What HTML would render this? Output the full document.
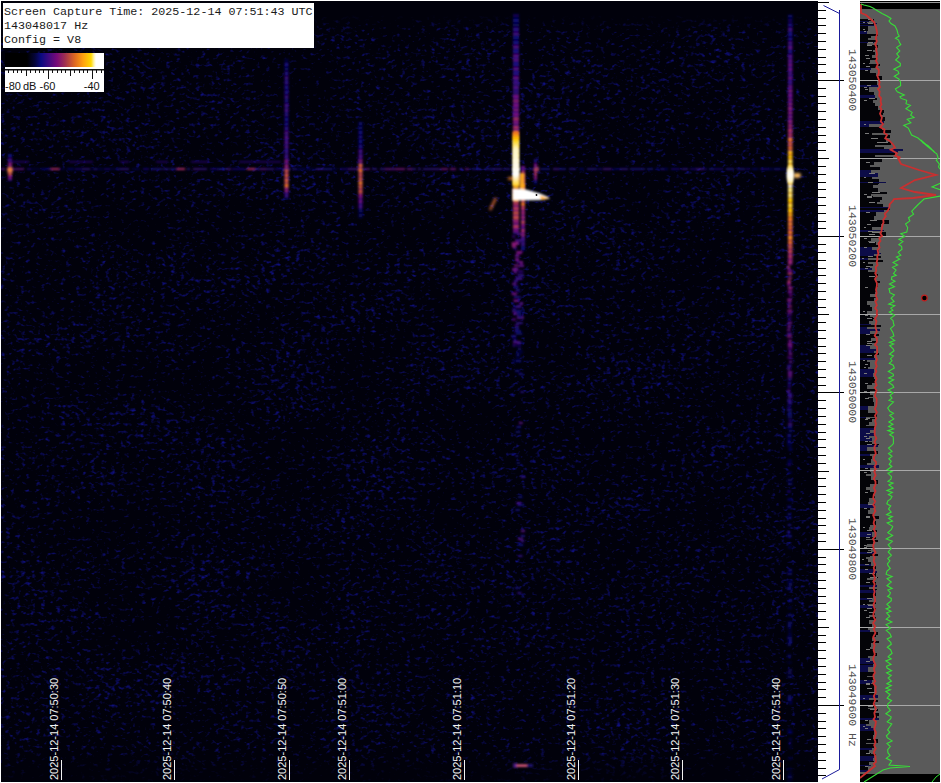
<!DOCTYPE html><html><head><meta charset="utf-8"><style>
html,body{margin:0;padding:0;background:#fff;width:941px;height:783px;overflow:hidden;position:relative}
.abs{position:absolute}
#spec{left:1px;top:1px;width:817px;height:781px;background:#01010b;overflow:hidden}
#tbox{left:3px;top:3px;width:311px;height:45px;background:#fff;font-family:"Liberation Mono",monospace;font-size:11.7px;color:#1a1a1a;white-space:pre}
#tbox div{position:absolute;left:1px;line-height:14px;margin-top:2px}
.tl{position:absolute;font-family:"Liberation Sans",sans-serif;font-size:11px;line-height:12px;color:#f2f2f2;white-space:pre;transform-origin:0 0;transform:rotate(-90deg)}
.tk{position:absolute;width:1px;height:20px;top:760px;background:#f2f2f2}
.fl{position:absolute;font-family:"Liberation Mono",monospace;font-size:11.5px;line-height:12px;color:#505050;white-space:pre;transform-origin:0 0;transform:rotate(90deg)}
#cb{left:5px;top:53px;width:99px;height:39px;background:#fff}
#grad{left:0;top:0;width:99px;height:14px;background:linear-gradient(90deg,#000 0px,#000 22px,#05053a 30px,#0a0a80 36px,#400a80 44px,#780a78 52px,#a03050 60px,#e06a20 70px,#ffa010 78px,#ffd800 86px,#fff4b0 89px,#fff 91px,#fff 99px)}
.cbt{position:absolute;top:27px;font-family:"Liberation Sans",sans-serif;font-size:11px;line-height:12px;color:#111;white-space:pre}
</style></head><body>
<div id="spec" class="abs"><svg width="817" height="781" style="position:absolute;left:0;top:0">
<defs>
<filter id="nz" x="0" y="0" width="100%" height="100%" color-interpolation-filters="sRGB">
<feTurbulence type="fractalNoise" baseFrequency="0.2 0.27" numOctaves="2" seed="5" result="t"/>
<feTurbulence type="fractalNoise" baseFrequency="0.012 0.02" numOctaves="2" seed="9" result="t2"/>
<feColorMatrix in="t" type="matrix" values="1 0 0 0 0  0 1 0 0 0  0 0 1 0 0  0 0 0 0 1" result="ta"/>
<feColorMatrix in="t2" type="matrix" values="1 0 0 0 0  0 1 0 0 0  0 0 1 0 0  0 0 0 0 1" result="t2a"/>
<feComposite in="ta" in2="t2a" operator="arithmetic" k1="0" k2="1" k3="0.22" k4="-0.11" result="t3"/>
<feColorMatrix in="t3" type="matrix" values="0 0 0 0 0.06  0 0 0 0 0.06  0 0 0 0 0.5  3 0 0 0 -1.74"/>
</filter>
<filter id="b05" x="-50%" y="-5%" width="200%" height="110%"><feGaussianBlur stdDeviation="1.1 1"/></filter>
<filter id="b1" x="-50%" y="-50%" width="200%" height="200%"><feGaussianBlur stdDeviation="1.4"/></filter>
<filter id="b2" x="-50%" y="-20%" width="200%" height="140%"><feGaussianBlur stdDeviation="2"/></filter>
<linearGradient id="s516" x1="0" y1="0" x2="0" y2="1">
<stop offset="0" stop-color="#3020a0" stop-opacity="0.7"/>
<stop offset="0.12" stop-color="#6a20a8"/>
<stop offset="0.25" stop-color="#7a2090"/>
<stop offset="0.34" stop-color="#e07030"/>
<stop offset="0.4" stop-color="#ffd000"/>
<stop offset="0.5" stop-color="#fffbe0"/>
<stop offset="0.53" stop-color="#ffe060"/>
<stop offset="0.58" stop-color="#e08030"/>
<stop offset="0.66" stop-color="#8030a0"/>
<stop offset="0.8" stop-color="#4020b0"/>
<stop offset="1" stop-color="#2020a0" stop-opacity="0"/>
</linearGradient>
<linearGradient id="s791" x1="0" y1="0" x2="0" y2="1">
<stop offset="0" stop-color="#3020a0" stop-opacity="0.6"/>
<stop offset="0.1" stop-color="#5a20b0"/>
<stop offset="0.22" stop-color="#a03080"/>
<stop offset="0.3" stop-color="#ff9020"/>
<stop offset="0.36" stop-color="#ffe070"/>
<stop offset="0.4" stop-color="#ffffff"/>
<stop offset="0.44" stop-color="#ffd840"/>
<stop offset="0.5" stop-color="#ff9a20"/>
<stop offset="0.6" stop-color="#a03090"/>
<stop offset="0.85" stop-color="#5020a0"/>
<stop offset="1" stop-color="#2020a0" stop-opacity="0"/>
</linearGradient>
<linearGradient id="s286" x1="0" y1="0" x2="0" y2="1">
<stop offset="0" stop-color="#3020a0" stop-opacity="0.5"/>
<stop offset="0.3" stop-color="#5020a8"/>
<stop offset="0.7" stop-color="#8a3070"/>
<stop offset="0.8" stop-color="#e08040"/>
<stop offset="0.87" stop-color="#c04a60"/>
<stop offset="1" stop-color="#3020a0" stop-opacity="0.3"/>
</linearGradient>
<linearGradient id="s360" x1="0" y1="0" x2="0" y2="1">
<stop offset="0" stop-color="#3020a0" stop-opacity="0.3"/>
<stop offset="0.35" stop-color="#6a20a0"/>
<stop offset="0.5" stop-color="#d07040"/>
<stop offset="0.6" stop-color="#a04070"/>
<stop offset="1" stop-color="#3020a0" stop-opacity="0.3"/>
</linearGradient>
</defs>
<rect x="0" y="0" width="817" height="781" filter="url(#nz)"/>
<linearGradient id="ft" x1="0" y1="0" x2="0" y2="1"><stop offset="0" stop-color="#01010b"/><stop offset="0.45" stop-color="#01010b"/><stop offset="1" stop-color="#01010b" stop-opacity="0"/></linearGradient>
<linearGradient id="fb" x1="0" y1="0" x2="0" y2="1"><stop offset="0" stop-color="#01010b" stop-opacity="0"/><stop offset="1" stop-color="#01010b" stop-opacity="0.85"/></linearGradient>
<rect x="0" y="0" width="817" height="30" fill="url(#ft)"/>
<rect x="0" y="745" width="817" height="36" fill="url(#fb)"/>
<g filter="url(#b05)"><rect x="0" y="167.3" width="4" height="1.6" fill="#580b81"/><rect x="6" y="167.3" width="8" height="1.6" fill="#4a0b81"/><rect x="14" y="167.3" width="9" height="1.6" fill="#5e0b81"/><rect x="26" y="167.3" width="4" height="1.6" fill="#0a0972"/><rect x="30" y="167.3" width="9" height="1.6" fill="#05053c"/><rect x="40" y="167.3" width="7" height="1.6" fill="#09086a"/><rect x="47" y="167.3" width="9" height="1.6" fill="#190a80"/><rect x="56" y="167.3" width="8" height="1.6" fill="#050540"/><rect x="66" y="167.3" width="7" height="1.6" fill="#09086c"/><rect x="74" y="167.3" width="7" height="1.6" fill="#0a0872"/><rect x="81" y="167.3" width="8" height="1.6" fill="#2e0a80"/><rect x="90" y="167.3" width="3" height="1.6" fill="#06064c"/><rect x="93" y="167.3" width="3" height="1.6" fill="#1f0a80"/><rect x="96" y="167.3" width="6" height="1.6" fill="#06064d"/><rect x="103" y="167.3" width="6" height="1.6" fill="#0a0870"/><rect x="109" y="167.3" width="8" height="1.6" fill="#050540"/><rect x="117" y="167.3" width="3" height="1.6" fill="#1c0a80"/><rect x="120" y="167.3" width="8" height="1.6" fill="#2f0a80"/><rect x="131" y="167.3" width="8" height="1.6" fill="#050543"/><rect x="142" y="167.3" width="6" height="1.6" fill="#0b0978"/><rect x="150" y="167.3" width="4" height="1.6" fill="#150a80"/><rect x="154" y="167.3" width="7" height="1.6" fill="#1c0a80"/><rect x="162" y="167.3" width="6" height="1.6" fill="#260a80"/><rect x="169" y="167.3" width="6" height="1.6" fill="#1a0a80"/><rect x="175" y="167.3" width="9" height="1.6" fill="#0a086e"/><rect x="186" y="167.3" width="3" height="1.6" fill="#250a80"/><rect x="192" y="167.3" width="7" height="1.6" fill="#400b81"/><rect x="199" y="167.3" width="7" height="1.6" fill="#310a80"/><rect x="209" y="167.3" width="7" height="1.6" fill="#0a0871"/><rect x="216" y="167.3" width="8" height="1.6" fill="#160a80"/><rect x="225" y="167.3" width="5" height="1.6" fill="#410b81"/><rect x="231" y="167.3" width="4" height="1.6" fill="#0a0870"/><rect x="235" y="167.3" width="9" height="1.6" fill="#0b0977"/><rect x="246" y="167.3" width="5" height="1.6" fill="#0a0976"/><rect x="251" y="167.3" width="8" height="1.6" fill="#280a80"/><rect x="259" y="167.3" width="6" height="1.6" fill="#510b81"/><rect x="265" y="167.3" width="8" height="1.6" fill="#2f0a80"/><rect x="274" y="167.3" width="6" height="1.6" fill="#0a0973"/><rect x="280" y="167.3" width="4" height="1.6" fill="#06064d"/><rect x="284" y="167.3" width="6" height="1.6" fill="#1e0a80"/><rect x="292" y="167.3" width="3" height="1.6" fill="#220a80"/><rect x="295" y="167.3" width="9" height="1.6" fill="#070758"/><rect x="305" y="167.3" width="3" height="1.6" fill="#090869"/><rect x="308" y="167.3" width="6" height="1.6" fill="#050543"/><rect x="315" y="167.3" width="8" height="1.6" fill="#280a80"/><rect x="323" y="167.3" width="8" height="1.6" fill="#160a80"/><rect x="331" y="167.3" width="5" height="1.6" fill="#06064b"/><rect x="339" y="167.3" width="8" height="1.6" fill="#0a0870"/><rect x="347" y="167.3" width="9" height="1.6" fill="#3f0b81"/><rect x="356" y="167.3" width="5" height="1.6" fill="#570b81"/><rect x="363" y="167.3" width="6" height="1.6" fill="#550b81"/><rect x="371" y="167.3" width="5" height="1.6" fill="#270a80"/><rect x="379" y="167.3" width="5" height="1.6" fill="#270a80"/><rect x="384" y="167.3" width="6" height="1.6" fill="#600b81"/><rect x="390" y="167.3" width="5" height="1.6" fill="#570b81"/><rect x="395" y="167.3" width="9" height="1.6" fill="#78127a"/><rect x="406" y="167.3" width="5" height="1.6" fill="#600b81"/><rect x="411" y="167.3" width="4" height="1.6" fill="#270a80"/><rect x="417" y="167.3" width="3" height="1.6" fill="#2c0a80"/><rect x="422" y="167.3" width="9" height="1.6" fill="#270a80"/><rect x="431" y="167.3" width="8" height="1.6" fill="#360a80"/><rect x="440" y="167.3" width="7" height="1.6" fill="#77127b"/><rect x="449" y="167.3" width="6" height="1.6" fill="#730f7e"/><rect x="458" y="167.3" width="4" height="1.6" fill="#2c0a80"/><rect x="464" y="167.3" width="4" height="1.6" fill="#630b81"/><rect x="471" y="167.3" width="9" height="1.6" fill="#1d0a80"/><rect x="483" y="167.3" width="9" height="1.6" fill="#180a80"/><rect x="492" y="167.3" width="9" height="1.6" fill="#2b0a80"/><rect x="503" y="167.3" width="6" height="1.6" fill="#250a80"/><rect x="511" y="167.3" width="9" height="1.6" fill="#120a80"/><rect x="520" y="167.3" width="5" height="1.6" fill="#3c0a80"/><rect x="528" y="167.3" width="5" height="1.6" fill="#250a80"/><rect x="533" y="167.3" width="6" height="1.6" fill="#08075a"/><rect x="540" y="167.3" width="9" height="1.6" fill="#0c0a80"/><rect x="552" y="167.3" width="6" height="1.6" fill="#3a0a80"/><rect x="558" y="167.3" width="7" height="1.6" fill="#160a80"/><rect x="568" y="167.3" width="7" height="1.6" fill="#240a80"/><rect x="578" y="167.3" width="5" height="1.6" fill="#090869"/><rect x="586" y="167.3" width="7" height="1.6" fill="#260a80"/><rect x="593" y="167.3" width="3" height="1.6" fill="#180a80"/><rect x="597" y="167.3" width="4" height="1.6" fill="#0a0870"/><rect x="602" y="167.3" width="8" height="1.6" fill="#3f0b81"/><rect x="610" y="167.3" width="9" height="1.6" fill="#070651"/><rect x="619" y="167.3" width="8" height="1.6" fill="#2c0a80"/><rect x="629" y="167.3" width="7" height="1.6" fill="#180a80"/><rect x="636" y="167.3" width="8" height="1.6" fill="#1b0a80"/><rect x="646" y="167.3" width="6" height="1.6" fill="#0d0a80"/><rect x="654" y="167.3" width="6" height="1.6" fill="#070651"/><rect x="660" y="167.3" width="3" height="1.6" fill="#1c0a80"/><rect x="663" y="167.3" width="4" height="1.6" fill="#090867"/><rect x="670" y="167.3" width="9" height="1.6" fill="#0a0975"/><rect x="681" y="167.3" width="6" height="1.6" fill="#2b0a80"/><rect x="689" y="167.3" width="6" height="1.6" fill="#0a086d"/><rect x="695" y="167.3" width="8" height="1.6" fill="#370a80"/><rect x="703" y="167.3" width="3" height="1.6" fill="#0a0870"/><rect x="708" y="167.3" width="5" height="1.6" fill="#150a80"/><rect x="713" y="167.3" width="9" height="1.6" fill="#0a086c"/><rect x="725" y="167.3" width="8" height="1.6" fill="#170a80"/><rect x="736" y="167.3" width="8" height="1.6" fill="#200a80"/><rect x="745" y="167.3" width="4" height="1.6" fill="#0a0870"/><rect x="751" y="167.3" width="6" height="1.6" fill="#08075d"/><rect x="759" y="167.3" width="9" height="1.6" fill="#0a0975"/><rect x="768" y="167.3" width="4" height="1.6" fill="#08075e"/><rect x="773" y="167.3" width="6" height="1.6" fill="#150a80"/><rect x="779" y="167.3" width="7" height="1.6" fill="#06064f"/><rect x="10" y="160" width="18" height="1.5" fill="#260a80" opacity="0.8"/><rect x="68" y="160" width="24" height="1.5" fill="#260a80" opacity="0.8"/><rect x="119" y="160" width="9" height="1.5" fill="#260a80" opacity="0.8"/><rect x="155" y="160" width="12" height="1.5" fill="#260a80" opacity="0.8"/><rect x="190" y="160" width="18" height="1.5" fill="#260a80" opacity="0.8"/><rect x="238" y="160" width="42" height="1.5" fill="#260a80" opacity="0.8"/><rect x="50" y="167" width="8" height="2" fill="#a02c60"/><rect x="176" y="167" width="8" height="2" fill="#a02c60"/><rect x="246" y="167" width="8" height="2" fill="#a02c60"/><rect x="7" y="153.0" width="4" height="3.0" fill="#0e0a80"/><rect x="7" y="156.0" width="4" height="1.5" fill="#040437"/><rect x="7" y="157.5" width="4" height="2.5" fill="#410b81"/><rect x="7" y="160.0" width="4" height="1.5" fill="#090865"/><rect x="7" y="161.5" width="4" height="3.5" fill="#801775"/><rect x="7" y="165.0" width="4" height="1.5" fill="#3a0a80"/><rect x="7" y="166.5" width="4" height="3.5" fill="#aa3259"/><rect x="7" y="170.0" width="4" height="1.5" fill="#720f7e"/><rect x="7" y="171.5" width="4" height="3.0" fill="#bd4548"/><rect x="7" y="174.5" width="4" height="1.5" fill="#811874"/><rect x="7" y="176.0" width="4" height="2.5" fill="#710e7f"/><rect x="7" y="178.5" width="4" height="1.5" fill="#240a80"/><rect x="283.5" y="58.0" width="4" height="2.5" fill="#060549"/><rect x="283.5" y="60.5" width="4" height="1.5" fill="#02021d"/><rect x="283.5" y="62.0" width="4" height="3.0" fill="#140a80"/><rect x="283.5" y="65.0" width="4" height="1.5" fill="#04043a"/><rect x="283.5" y="66.5" width="4" height="3.0" fill="#0a0870"/><rect x="283.5" y="69.5" width="4" height="1.5" fill="#03032f"/><rect x="283.5" y="71.0" width="4" height="3.0" fill="#200a80"/><rect x="283.5" y="74.0" width="4" height="1.5" fill="#050543"/><rect x="283.5" y="75.5" width="4" height="3.0" fill="#3b0a80"/><rect x="283.5" y="78.5" width="4" height="1.5" fill="#08075f"/><rect x="283.5" y="80.0" width="4" height="3.5" fill="#2f0a80"/><rect x="283.5" y="83.5" width="4" height="1.5" fill="#070653"/><rect x="283.5" y="85.0" width="4" height="3.0" fill="#1f0a80"/><rect x="283.5" y="88.0" width="4" height="1.5" fill="#050543"/><rect x="283.5" y="89.5" width="4" height="3.5" fill="#1e0a80"/><rect x="283.5" y="93.0" width="4" height="1.5" fill="#050541"/><rect x="283.5" y="94.5" width="4" height="2.5" fill="#370a80"/><rect x="283.5" y="97.0" width="4" height="1.5" fill="#08075b"/><rect x="283.5" y="98.5" width="4" height="3.0" fill="#1e0a80"/><rect x="283.5" y="101.5" width="4" height="1.5" fill="#050541"/><rect x="283.5" y="103.0" width="4" height="3.0" fill="#3c0a80"/><rect x="283.5" y="106.0" width="4" height="1.5" fill="#080760"/><rect x="283.5" y="107.5" width="4" height="3.5" fill="#3c0a80"/><rect x="283.5" y="111.0" width="4" height="1.5" fill="#080760"/><rect x="283.5" y="112.5" width="4" height="3.0" fill="#280a80"/><rect x="283.5" y="115.5" width="4" height="1.5" fill="#06064b"/><rect x="283.5" y="117.0" width="4" height="3.0" fill="#130a80"/><rect x="283.5" y="120.0" width="4" height="1.5" fill="#040439"/><rect x="283.5" y="121.5" width="4" height="3.0" fill="#1c0a80"/><rect x="283.5" y="124.5" width="4" height="1.5" fill="#05053f"/><rect x="283.5" y="126.0" width="4" height="3.0" fill="#2c0a80"/><rect x="283.5" y="129.0" width="4" height="1.5" fill="#07064f"/><rect x="283.5" y="130.5" width="4" height="3.0" fill="#4f0b81"/><rect x="283.5" y="133.5" width="4" height="1.5" fill="#0a0975"/><rect x="283.5" y="135.0" width="4" height="3.0" fill="#530b81"/><rect x="283.5" y="138.0" width="4" height="1.5" fill="#0b0978"/><rect x="283.5" y="139.5" width="4" height="3.5" fill="#4a0b81"/><rect x="283.5" y="143.0" width="4" height="1.5" fill="#0a086f"/><rect x="283.5" y="144.5" width="4" height="3.0" fill="#4e0b81"/><rect x="283.5" y="147.5" width="4" height="1.5" fill="#0a0973"/><rect x="283.5" y="149.0" width="4" height="3.0" fill="#360a80"/><rect x="283.5" y="152.0" width="4" height="1.5" fill="#08075a"/><rect x="283.5" y="153.5" width="4" height="3.5" fill="#3b0a80"/><rect x="283.5" y="157.0" width="4" height="1.5" fill="#080760"/><rect x="283.5" y="158.5" width="4" height="3.5" fill="#75107c"/><rect x="283.5" y="162.0" width="4" height="1.5" fill="#2a0a80"/><rect x="283.5" y="163.5" width="4" height="3.5" fill="#8a1d6f"/><rect x="283.5" y="167.0" width="4" height="1.5" fill="#470b81"/><rect x="283.5" y="168.5" width="4" height="3.0" fill="#cc543a"/><rect x="283.5" y="171.5" width="4" height="1.5" fill="#8d206c"/><rect x="283.5" y="173.0" width="4" height="3.5" fill="#cd5539"/><rect x="283.5" y="176.5" width="4" height="1.5" fill="#8e206c"/><rect x="283.5" y="178.0" width="4" height="3.0" fill="#d65e30"/><rect x="283.5" y="181.0" width="4" height="1.5" fill="#952567"/><rect x="283.5" y="182.5" width="4" height="3.5" fill="#e46c23"/><rect x="283.5" y="186.0" width="4" height="1.5" fill="#a02c60"/><rect x="283.5" y="187.5" width="4" height="3.5" fill="#7d1577"/><rect x="283.5" y="191.0" width="4" height="1.5" fill="#350a80"/><rect x="283.5" y="192.5" width="4" height="3.5" fill="#380a80"/><rect x="283.5" y="196.0" width="4" height="1.5" fill="#08075d"/><rect x="357.5" y="121.0" width="4" height="3.0" fill="#09086b"/><rect x="357.5" y="124.0" width="4" height="1.5" fill="#03032c"/><rect x="357.5" y="125.5" width="4" height="3.0" fill="#090867"/><rect x="357.5" y="128.5" width="4" height="1.5" fill="#03032b"/><rect x="357.5" y="130.0" width="4" height="3.5" fill="#0f0a80"/><rect x="357.5" y="133.5" width="4" height="1.5" fill="#040437"/><rect x="357.5" y="135.0" width="4" height="2.5" fill="#1a0a80"/><rect x="357.5" y="137.5" width="4" height="1.5" fill="#05053d"/><rect x="357.5" y="139.0" width="4" height="3.5" fill="#0d0a80"/><rect x="357.5" y="142.5" width="4" height="1.5" fill="#040436"/><rect x="357.5" y="144.0" width="4" height="3.0" fill="#1a0a80"/><rect x="357.5" y="147.0" width="4" height="1.5" fill="#05053d"/><rect x="357.5" y="148.5" width="4" height="3.5" fill="#410b81"/><rect x="357.5" y="152.0" width="4" height="1.5" fill="#090866"/><rect x="357.5" y="153.5" width="4" height="3.5" fill="#4a0b81"/><rect x="357.5" y="157.0" width="4" height="1.5" fill="#0a086f"/><rect x="357.5" y="158.5" width="4" height="3.0" fill="#811874"/><rect x="357.5" y="161.5" width="4" height="1.5" fill="#3b0a80"/><rect x="357.5" y="163.0" width="4" height="3.0" fill="#d65e30"/><rect x="357.5" y="166.0" width="4" height="1.5" fill="#962567"/><rect x="357.5" y="167.5" width="4" height="3.5" fill="#e76f20"/><rect x="357.5" y="171.0" width="4" height="1.5" fill="#a32d5e"/><rect x="357.5" y="172.5" width="4" height="2.5" fill="#c9513c"/><rect x="357.5" y="175.0" width="4" height="1.5" fill="#8b1e6e"/><rect x="357.5" y="176.5" width="4" height="2.5" fill="#d45c32"/><rect x="357.5" y="179.0" width="4" height="1.5" fill="#942468"/><rect x="357.5" y="180.5" width="4" height="2.5" fill="#f17e17"/><rect x="357.5" y="183.0" width="4" height="1.5" fill="#b03854"/><rect x="357.5" y="184.5" width="4" height="3.0" fill="#d45c32"/><rect x="357.5" y="187.5" width="4" height="1.5" fill="#932468"/><rect x="357.5" y="189.0" width="4" height="3.5" fill="#c74f3e"/><rect x="357.5" y="192.5" width="4" height="1.5" fill="#8a1d6f"/><rect x="357.5" y="194.0" width="4" height="3.5" fill="#76117c"/><rect x="357.5" y="197.5" width="4" height="1.5" fill="#2c0a80"/><rect x="357.5" y="199.0" width="4" height="3.5" fill="#670b81"/><rect x="357.5" y="202.5" width="4" height="1.5" fill="#180a80"/><rect x="357.5" y="204.0" width="4" height="3.0" fill="#440b81"/><rect x="357.5" y="207.0" width="4" height="1.5" fill="#090868"/><rect x="357.5" y="208.5" width="4" height="2.5" fill="#090865"/><rect x="357.5" y="211.0" width="4" height="1.5" fill="#03032a"/><rect x="357.5" y="212.5" width="4" height="3.5" fill="#080759"/><rect x="357.5" y="216.0" width="4" height="1.5" fill="#030324"/><rect x="512" y="13.0" width="6" height="3.0" fill="#070652"/><rect x="512" y="16.0" width="6" height="1.5" fill="#020221"/><rect x="512" y="17.5" width="6" height="3.5" fill="#0a0974"/><rect x="512" y="21.0" width="6" height="1.5" fill="#040430"/><rect x="512" y="22.5" width="6" height="2.5" fill="#080761"/><rect x="512" y="25.0" width="6" height="1.5" fill="#030328"/><rect x="512" y="26.5" width="6" height="3.5" fill="#250a80"/><rect x="512" y="30.0" width="6" height="1.5" fill="#060548"/><rect x="512" y="31.5" width="6" height="3.0" fill="#410b81"/><rect x="512" y="34.5" width="6" height="1.5" fill="#090865"/><rect x="512" y="36.0" width="6" height="2.5" fill="#100a80"/><rect x="512" y="38.5" width="6" height="1.5" fill="#040438"/><rect x="512" y="40.0" width="6" height="3.0" fill="#190a80"/><rect x="512" y="43.0" width="6" height="1.5" fill="#05053c"/><rect x="512" y="44.5" width="6" height="3.0" fill="#4f0b81"/><rect x="512" y="47.5" width="6" height="1.5" fill="#0a0974"/><rect x="512" y="49.0" width="6" height="3.0" fill="#1b0a80"/><rect x="512" y="52.0" width="6" height="1.5" fill="#05053e"/><rect x="512" y="53.5" width="6" height="2.5" fill="#580b81"/><rect x="512" y="56.0" width="6" height="1.5" fill="#0b097d"/><rect x="512" y="57.5" width="6" height="3.0" fill="#590b81"/><rect x="512" y="60.5" width="6" height="1.5" fill="#0b097e"/><rect x="512" y="62.0" width="6" height="3.0" fill="#240a80"/><rect x="512" y="65.0" width="6" height="1.5" fill="#060547"/><rect x="512" y="66.5" width="6" height="3.0" fill="#540b81"/><rect x="512" y="69.5" width="6" height="1.5" fill="#0b0979"/><rect x="512" y="71.0" width="6" height="3.0" fill="#280a80"/><rect x="512" y="74.0" width="6" height="1.5" fill="#06064c"/><rect x="512" y="75.5" width="6" height="3.0" fill="#640b81"/><rect x="512" y="78.5" width="6" height="1.5" fill="#150a80"/><rect x="512" y="80.0" width="6" height="3.0" fill="#3c0a80"/><rect x="512" y="83.0" width="6" height="1.5" fill="#080761"/><rect x="512" y="84.5" width="6" height="3.5" fill="#4c0b81"/><rect x="512" y="88.0" width="6" height="1.5" fill="#0a0871"/><rect x="512" y="89.5" width="6" height="3.0" fill="#390a80"/><rect x="512" y="92.5" width="6" height="1.5" fill="#08075e"/><rect x="512" y="94.0" width="6" height="3.0" fill="#710e7f"/><rect x="512" y="97.0" width="6" height="1.5" fill="#240a80"/><rect x="512" y="98.5" width="6" height="3.0" fill="#891d6f"/><rect x="512" y="101.5" width="6" height="1.5" fill="#470b81"/><rect x="512" y="103.0" width="6" height="3.0" fill="#74107d"/><rect x="512" y="106.0" width="6" height="1.5" fill="#290a80"/><rect x="512" y="107.5" width="6" height="3.0" fill="#7c1578"/><rect x="512" y="110.5" width="6" height="1.5" fill="#340a80"/><rect x="512" y="112.0" width="6" height="3.0" fill="#76117c"/><rect x="512" y="115.0" width="6" height="1.5" fill="#2c0a80"/><rect x="512" y="116.5" width="6" height="3.0" fill="#a32d5e"/><rect x="512" y="119.5" width="6" height="1.5" fill="#6b0b81"/><rect x="512" y="121.0" width="6" height="2.5" fill="#7a1479"/><rect x="512" y="123.5" width="6" height="1.5" fill="#310a80"/><rect x="512" y="125.0" width="6" height="3.5" fill="#a42e5d"/><rect x="512" y="128.5" width="6" height="1.5" fill="#6c0b81"/><rect x="512" y="130.0" width="6" height="3.0" fill="#e06827"/><rect x="512" y="133.0" width="6" height="1.5" fill="#9e2a61"/><rect x="512" y="134.5" width="6" height="3.5" fill="#f9b208"/><rect x="512" y="138.0" width="6" height="1.5" fill="#e36b24"/><rect x="512" y="139.5" width="6" height="3.0" fill="#fff1a1"/><rect x="512" y="142.5" width="6" height="1.5" fill="#fbbf05"/><rect x="512" y="144.0" width="6" height="3.0" fill="#fdca02"/><rect x="512" y="147.0" width="6" height="1.5" fill="#f18216"/><rect x="512" y="148.5" width="6" height="3.0" fill="#fff09c"/><rect x="512" y="151.5" width="6" height="1.5" fill="#fbbe05"/><rect x="512" y="153.0" width="6" height="3.5" fill="#ffe666"/><rect x="512" y="156.5" width="6" height="1.5" fill="#f8ac0a"/><rect x="512" y="158.0" width="6" height="3.0" fill="#fff5b7"/><rect x="512" y="161.0" width="6" height="1.5" fill="#fdc702"/><rect x="512" y="162.5" width="6" height="3.0" fill="#fffcea"/><rect x="512" y="165.5" width="6" height="1.5" fill="#ffd71c"/><rect x="512" y="167.0" width="6" height="3.0" fill="#ffffff"/><rect x="512" y="170.0" width="6" height="1.5" fill="#ffe357"/><rect x="512" y="171.5" width="6" height="2.5" fill="#ffffff"/><rect x="512" y="174.0" width="6" height="1.5" fill="#ffde3e"/><rect x="512" y="175.5" width="6" height="3.0" fill="#ffeb80"/><rect x="512" y="178.5" width="6" height="1.5" fill="#fab408"/><rect x="512" y="180.0" width="6" height="3.0" fill="#ffd308"/><rect x="512" y="183.0" width="6" height="1.5" fill="#f38c13"/><rect x="512" y="184.5" width="6" height="3.0" fill="#f8a90b"/><rect x="512" y="187.5" width="6" height="1.5" fill="#da622d"/><rect x="512" y="189.0" width="6" height="2.5" fill="#ed751b"/><rect x="512" y="191.5" width="6" height="1.5" fill="#a8305b"/><rect x="512" y="193.0" width="6" height="2.5" fill="#f8ad0a"/><rect x="512" y="195.5" width="6" height="1.5" fill="#dd6529"/><rect x="512" y="197.0" width="6" height="3.0" fill="#f38b13"/><rect x="512" y="200.0" width="6" height="1.5" fill="#bd4548"/><rect x="512" y="201.5" width="6" height="3.0" fill="#ae3655"/><rect x="512" y="204.5" width="6" height="1.5" fill="#76117c"/><rect x="512" y="206.0" width="6" height="3.0" fill="#af3754"/><rect x="512" y="209.0" width="6" height="1.5" fill="#77117b"/><rect x="512" y="210.5" width="6" height="3.0" fill="#c74f3e"/><rect x="512" y="213.5" width="6" height="1.5" fill="#8a1d6f"/><rect x="512" y="215.0" width="6" height="3.5" fill="#c14944"/><rect x="512" y="218.5" width="6" height="1.5" fill="#851a72"/><rect x="512" y="220.0" width="6" height="2.5" fill="#8c1f6d"/><rect x="512" y="222.5" width="6" height="1.5" fill="#4a0b81"/><rect x="512" y="224.0" width="6" height="3.0" fill="#aa3259"/><rect x="512" y="227.0" width="6" height="1.5" fill="#720e7e"/><rect x="512" y="228.5" width="6" height="3.0" fill="#6d0b81"/><rect x="512" y="231.5" width="6" height="1.5" fill="#1f0a80"/><rect x="515.6" y="232" width="5.1" height="2" fill="#470b81"/><rect x="511.2" y="234.5" width="3.1" height="2" fill="#3c0a80"/><rect x="514.2" y="238.0" width="7.0" height="2.5" fill="#710e7f"/><rect x="514.6" y="238.0" width="6.1" height="2.5" fill="#360a80"/><rect x="514.8" y="241.0" width="3.6" height="3" fill="#350a80"/><rect x="510.7" y="241.0" width="6.8" height="3" fill="#821974"/><rect x="510.8" y="244.0" width="4.4" height="2.5" fill="#881c70"/><rect x="512.2" y="246.5" width="4.0" height="2" fill="#2a0a80"/><rect x="515.3" y="250.0" width="5.8" height="3" fill="#75107c"/><rect x="514.0" y="253.5" width="4.5" height="2.5" fill="#640b81"/><rect x="514.1" y="257.0" width="3.9" height="3" fill="#6c0b81"/><rect x="515.6" y="260.0" width="6.3" height="2" fill="#390a80"/><rect x="518.8" y="260.0" width="3.0" height="3" fill="#700d80"/><rect x="517.8" y="263.5" width="5.2" height="2.5" fill="#590b81"/><rect x="513.0" y="263.5" width="4.6" height="2" fill="#76117c"/><rect x="514.2" y="267.0" width="3.2" height="2" fill="#630b81"/><rect x="511.2" y="267.0" width="4.9" height="3" fill="#6a0b81"/><rect x="516.8" y="269.5" width="5.6" height="2" fill="#320a80"/><rect x="512.7" y="269.5" width="3.0" height="3" fill="#500b81"/><rect x="516.4" y="273.0" width="6.4" height="2" fill="#310a80"/><rect x="514.5" y="276.0" width="7.0" height="3" fill="#350a80"/><rect x="512.7" y="279.0" width="4.1" height="2.5" fill="#300a80"/><rect x="511.1" y="282.0" width="4.3" height="2" fill="#570b81"/><rect x="512.9" y="284.5" width="4.6" height="2.5" fill="#120a80"/><rect x="514.7" y="288.0" width="4.1" height="2.5" fill="#230a80"/><rect x="510.6" y="291.5" width="5.2" height="2.5" fill="#6a0b81"/><rect x="512.7" y="295.0" width="7.0" height="2" fill="#1d0a80"/><rect x="512.5" y="298.5" width="5.1" height="2.5" fill="#6b0b81"/><rect x="518.8" y="301.0" width="3.3" height="3" fill="#4e0b81"/><rect x="514.9" y="304.0" width="5.3" height="3" fill="#360a80"/><rect x="511.4" y="306.5" width="3.6" height="2" fill="#1f0a80"/><rect x="514.4" y="309.0" width="5.8" height="2" fill="#0c0a80"/><rect x="511.2" y="309.0" width="3.1" height="2.5" fill="#340a80"/><rect x="512.6" y="311.5" width="6.5" height="2.5" fill="#5f0b81"/><rect x="515.1" y="311.5" width="5.5" height="3" fill="#0a086e"/><rect x="516.1" y="315.0" width="6.7" height="3" fill="#500b81"/><rect x="517.9" y="315.0" width="3.1" height="2" fill="#0b097a"/><rect x="511.1" y="317.5" width="3.7" height="2" fill="#570b81"/><rect x="515.3" y="321.0" width="6.6" height="2" fill="#2f0a80"/><rect x="513.6" y="323.5" width="4.1" height="2" fill="#350a80"/><rect x="514.2" y="326.0" width="3.7" height="2.5" fill="#1d0a80"/><rect x="513.4" y="329.0" width="5.3" height="2.5" fill="#1b0a80"/><rect x="516.6" y="329.0" width="3.4" height="3" fill="#09086c"/><rect x="515.0" y="331.5" width="6.6" height="2.5" fill="#070757"/><rect x="510.3" y="334.0" width="4.7" height="2.5" fill="#1c0a80"/><rect x="512.2" y="337.5" width="3.4" height="3" fill="#0a0871"/><rect x="516.2" y="340.0" width="3.8" height="3" fill="#2b0a80"/><rect x="512.2" y="340.0" width="6.5" height="2.5" fill="#470b81"/><rect x="511.6" y="343.5" width="3.2" height="2" fill="#260a80"/><rect x="515.8" y="343.5" width="4.4" height="2.5" fill="#070653"/><rect x="516.8" y="347.0" width="3.2" height="2.5" fill="#080762"/><rect x="518.0" y="349.5" width="4.0" height="3" fill="#040436"/><rect x="515.4" y="352.0" width="3.2" height="3" fill="#090868"/><rect x="515.2" y="355.5" width="3.4" height="2.5" fill="#040439"/><rect x="510.4" y="359.0" width="4.9" height="2.5" fill="#030328"/><rect x="514.5" y="359.0" width="5.9" height="2" fill="#0b097b"/><rect x="517.5" y="554" width="3.9" height="2" fill="#330a80"/><rect x="519.6" y="534" width="4.2" height="2" fill="#1a0a80"/><rect x="519.9" y="529" width="4.1" height="2" fill="#520b81"/><rect x="519.5" y="390" width="3.4" height="2" fill="#280a80"/><rect x="515.4" y="425" width="4.6" height="2" fill="#0e0a80"/><rect x="517.1" y="495" width="4.4" height="2" fill="#0a086e"/><rect x="514.1" y="369" width="4.4" height="2" fill="#0b097a"/><rect x="515.5" y="461" width="3.4" height="2" fill="#090866"/><rect x="516.5" y="503" width="3.7" height="2" fill="#1e0a80"/><rect x="517.8" y="372" width="4.1" height="2" fill="#130a80"/><rect x="514.3" y="508" width="4.5" height="2" fill="#0a0976"/><rect x="519.8" y="539" width="3.6" height="2" fill="#360a80"/><rect x="517.6" y="543" width="4.8" height="2" fill="#100a80"/><rect x="519.9" y="475" width="4.0" height="2" fill="#320a80"/><rect x="518.0" y="421" width="3.7" height="2" fill="#550b81"/><rect x="514.5" y="430" width="5.0" height="2" fill="#090867"/><rect x="515.4" y="501" width="4.7" height="2" fill="#430b81"/><rect x="516.9" y="537" width="4.8" height="2" fill="#4d0b81"/><rect x="519.5" y="503" width="3.6" height="2" fill="#0a0974"/><rect x="516.4" y="591" width="4.0" height="2" fill="#2b0a80"/><rect x="514.3" y="454" width="3.2" height="2" fill="#0a086d"/><rect x="514.1" y="586" width="3.8" height="2" fill="#160a80"/><rect x="520" y="165.0" width="4" height="3.0" fill="#630b81"/><rect x="520" y="168.0" width="4" height="1.5" fill="#150a80"/><rect x="520" y="169.5" width="4" height="2.5" fill="#9a2864"/><rect x="520" y="172.0" width="4" height="1.5" fill="#5e0b81"/><rect x="520" y="173.5" width="4" height="3.0" fill="#ba424a"/><rect x="520" y="176.5" width="4" height="1.5" fill="#7f1776"/><rect x="520" y="178.0" width="4" height="3.0" fill="#a9315a"/><rect x="520" y="181.0" width="4" height="1.5" fill="#710e7f"/><rect x="520" y="182.5" width="4" height="3.5" fill="#f07818"/><rect x="520" y="186.0" width="4" height="1.5" fill="#aa3259"/><rect x="520" y="187.5" width="4" height="3.5" fill="#db632c"/><rect x="520" y="191.0" width="4" height="1.5" fill="#992764"/><rect x="520" y="192.5" width="4" height="3.0" fill="#ad3556"/><rect x="520" y="195.5" width="4" height="1.5" fill="#75107c"/><rect x="520" y="197.0" width="4" height="3.0" fill="#cc5439"/><rect x="520" y="200.0" width="4" height="1.5" fill="#8d206c"/><rect x="520" y="201.5" width="4" height="3.0" fill="#f07818"/><rect x="520" y="204.5" width="4" height="1.5" fill="#aa3259"/><rect x="520" y="206.0" width="4" height="3.5" fill="#a7305b"/><rect x="520" y="209.5" width="4" height="1.5" fill="#700d80"/><rect x="520" y="211.0" width="4" height="2.5" fill="#9b2863"/><rect x="520" y="213.5" width="4" height="1.5" fill="#5f0b81"/><rect x="520" y="215.0" width="4" height="3.5" fill="#91226a"/><rect x="520" y="218.5" width="4" height="1.5" fill="#520b81"/><rect x="520" y="220.0" width="4" height="2.5" fill="#ba424a"/><rect x="520" y="222.5" width="4" height="1.5" fill="#7f1776"/><rect x="520" y="224.0" width="4" height="2.5" fill="#77117b"/><rect x="520" y="226.5" width="4" height="1.5" fill="#2c0a80"/><rect x="520" y="228.0" width="4" height="3.0" fill="#992764"/><rect x="520" y="231.0" width="4" height="1.5" fill="#5d0b81"/><rect x="520" y="232.5" width="4" height="3.0" fill="#841a73"/><rect x="520" y="235.5" width="4" height="1.5" fill="#3e0b81"/><rect x="520" y="237.0" width="4" height="3.0" fill="#410b81"/><rect x="520" y="240.0" width="4" height="1.5" fill="#090866"/><rect x="520" y="241.5" width="4" height="3.0" fill="#3d0b81"/><rect x="520" y="244.5" width="4" height="1.5" fill="#080762"/><rect x="520" y="246.0" width="4" height="3.0" fill="#0b0978"/><rect x="520" y="249.0" width="4" height="1.5" fill="#040432"/><rect x="787" y="14.0" width="4.5" height="2.5" fill="#0a0871"/><rect x="787" y="16.5" width="4.5" height="1.5" fill="#03032f"/><rect x="787" y="18.0" width="4.5" height="3.0" fill="#070654"/><rect x="787" y="21.0" width="4.5" height="1.5" fill="#020223"/><rect x="787" y="22.5" width="4.5" height="3.0" fill="#1c0a80"/><rect x="787" y="25.5" width="4.5" height="1.5" fill="#05053f"/><rect x="787" y="27.0" width="4.5" height="3.5" fill="#3d0b81"/><rect x="787" y="30.5" width="4.5" height="1.5" fill="#080761"/><rect x="787" y="32.0" width="4.5" height="3.0" fill="#140a80"/><rect x="787" y="35.0" width="4.5" height="1.5" fill="#04043a"/><rect x="787" y="36.5" width="4.5" height="2.5" fill="#1a0a80"/><rect x="787" y="39.0" width="4.5" height="1.5" fill="#05053d"/><rect x="787" y="40.5" width="4.5" height="3.0" fill="#450b81"/><rect x="787" y="43.5" width="4.5" height="1.5" fill="#09086a"/><rect x="787" y="45.0" width="4.5" height="3.5" fill="#580b81"/><rect x="787" y="48.5" width="4.5" height="1.5" fill="#0b097d"/><rect x="787" y="50.0" width="4.5" height="2.5" fill="#240a80"/><rect x="787" y="52.5" width="4.5" height="1.5" fill="#060548"/><rect x="787" y="54.0" width="4.5" height="3.0" fill="#4d0b81"/><rect x="787" y="57.0" width="4.5" height="1.5" fill="#0a0972"/><rect x="787" y="58.5" width="4.5" height="2.5" fill="#600b81"/><rect x="787" y="61.0" width="4.5" height="1.5" fill="#110a80"/><rect x="787" y="62.5" width="4.5" height="3.0" fill="#6f0c81"/><rect x="787" y="65.5" width="4.5" height="1.5" fill="#210a80"/><rect x="787" y="67.0" width="4.5" height="3.0" fill="#650b81"/><rect x="787" y="70.0" width="4.5" height="1.5" fill="#160a80"/><rect x="787" y="71.5" width="4.5" height="3.0" fill="#4d0b81"/><rect x="787" y="74.5" width="4.5" height="1.5" fill="#0a0972"/><rect x="787" y="76.0" width="4.5" height="2.5" fill="#6a0b81"/><rect x="787" y="78.5" width="4.5" height="1.5" fill="#1c0a80"/><rect x="787" y="80.0" width="4.5" height="3.0" fill="#3a0a80"/><rect x="787" y="83.0" width="4.5" height="1.5" fill="#08075f"/><rect x="787" y="84.5" width="4.5" height="2.5" fill="#690b81"/><rect x="787" y="87.0" width="4.5" height="1.5" fill="#1a0a80"/><rect x="787" y="88.5" width="4.5" height="3.0" fill="#7c1578"/><rect x="787" y="91.5" width="4.5" height="1.5" fill="#340a80"/><rect x="787" y="93.0" width="4.5" height="3.0" fill="#6f0c81"/><rect x="787" y="96.0" width="4.5" height="1.5" fill="#210a80"/><rect x="787" y="97.5" width="4.5" height="3.0" fill="#76117c"/><rect x="787" y="100.5" width="4.5" height="1.5" fill="#2b0a80"/><rect x="787" y="102.0" width="4.5" height="2.5" fill="#821974"/><rect x="787" y="104.5" width="4.5" height="1.5" fill="#3c0a80"/><rect x="787" y="106.0" width="4.5" height="3.0" fill="#851b72"/><rect x="787" y="109.0" width="4.5" height="1.5" fill="#410b81"/><rect x="787" y="110.5" width="4.5" height="3.0" fill="#7e1677"/><rect x="787" y="113.5" width="4.5" height="1.5" fill="#360a80"/><rect x="787" y="115.0" width="4.5" height="2.5" fill="#79137a"/><rect x="787" y="117.5" width="4.5" height="1.5" fill="#300a80"/><rect x="787" y="119.0" width="4.5" height="3.0" fill="#841a72"/><rect x="787" y="122.0" width="4.5" height="1.5" fill="#3f0b81"/><rect x="787" y="123.5" width="4.5" height="3.0" fill="#992764"/><rect x="787" y="126.5" width="4.5" height="1.5" fill="#5d0b81"/><rect x="787" y="128.0" width="4.5" height="3.0" fill="#a9315a"/><rect x="787" y="131.0" width="4.5" height="1.5" fill="#720e7e"/><rect x="787" y="132.5" width="4.5" height="3.0" fill="#ab3358"/><rect x="787" y="135.5" width="4.5" height="1.5" fill="#740f7d"/><rect x="787" y="137.0" width="4.5" height="3.0" fill="#ef7719"/><rect x="787" y="140.0" width="4.5" height="1.5" fill="#a9315a"/><rect x="787" y="141.5" width="4.5" height="2.5" fill="#d9612e"/><rect x="787" y="144.0" width="4.5" height="1.5" fill="#972666"/><rect x="787" y="145.5" width="4.5" height="3.0" fill="#e9711f"/><rect x="787" y="148.5" width="4.5" height="1.5" fill="#a42e5d"/><rect x="787" y="150.0" width="4.5" height="3.0" fill="#fab807"/><rect x="787" y="153.0" width="4.5" height="1.5" fill="#e87020"/><rect x="787" y="154.5" width="4.5" height="3.0" fill="#fecf00"/><rect x="787" y="157.5" width="4.5" height="1.5" fill="#f28714"/><rect x="787" y="159.0" width="4.5" height="3.5" fill="#ffe255"/><rect x="787" y="162.5" width="4.5" height="1.5" fill="#f7a60c"/><rect x="787" y="164.0" width="4.5" height="3.5" fill="#ffe253"/><rect x="787" y="167.5" width="4.5" height="1.5" fill="#f7a50c"/><rect x="787" y="169.0" width="4.5" height="3.5" fill="#fff7c4"/><rect x="787" y="172.5" width="4.5" height="1.5" fill="#fecc01"/><rect x="787" y="174.0" width="4.5" height="3.5" fill="#ffe45c"/><rect x="787" y="177.5" width="4.5" height="1.5" fill="#f8a80b"/><rect x="787" y="179.0" width="4.5" height="3.5" fill="#ffea7c"/><rect x="787" y="182.5" width="4.5" height="1.5" fill="#f9b308"/><rect x="787" y="184.0" width="4.5" height="2.5" fill="#fffefa"/><rect x="787" y="186.5" width="4.5" height="1.5" fill="#ffdb30"/><rect x="787" y="188.0" width="4.5" height="3.5" fill="#ffeb84"/><rect x="787" y="191.5" width="4.5" height="1.5" fill="#fab607"/><rect x="787" y="193.0" width="4.5" height="3.5" fill="#ffe875"/><rect x="787" y="196.5" width="4.5" height="1.5" fill="#f9b109"/><rect x="787" y="198.0" width="4.5" height="3.5" fill="#fece01"/><rect x="787" y="201.5" width="4.5" height="1.5" fill="#f28615"/><rect x="787" y="203.0" width="4.5" height="3.5" fill="#ffdc34"/><rect x="787" y="206.5" width="4.5" height="1.5" fill="#f59b0f"/><rect x="787" y="208.0" width="4.5" height="3.0" fill="#fdc802"/><rect x="787" y="211.0" width="4.5" height="1.5" fill="#f18016"/><rect x="787" y="212.5" width="4.5" height="3.0" fill="#f8a80b"/><rect x="787" y="215.5" width="4.5" height="1.5" fill="#d8602e"/><rect x="787" y="217.0" width="4.5" height="3.0" fill="#f07d17"/><rect x="787" y="220.0" width="4.5" height="1.5" fill="#af3755"/><rect x="787" y="221.5" width="4.5" height="2.5" fill="#f18216"/><rect x="787" y="224.0" width="4.5" height="1.5" fill="#b33b50"/><rect x="787" y="225.5" width="4.5" height="3.0" fill="#ea721d"/><rect x="787" y="228.5" width="4.5" height="1.5" fill="#a62f5c"/><rect x="787" y="230.0" width="4.5" height="3.5" fill="#e9711f"/><rect x="787" y="233.5" width="4.5" height="1.5" fill="#a42e5d"/><rect x="787" y="235.0" width="4.5" height="3.0" fill="#f49012"/><rect x="787" y="238.0" width="4.5" height="1.5" fill="#c14943"/><rect x="787" y="239.5" width="4.5" height="3.5" fill="#df6728"/><rect x="787" y="243.0" width="4.5" height="1.5" fill="#9c2962"/><rect x="787" y="244.5" width="4.5" height="3.0" fill="#ce5637"/><rect x="787" y="247.5" width="4.5" height="1.5" fill="#8f216b"/><rect x="787" y="249.0" width="4.5" height="3.5" fill="#b8404c"/><rect x="787" y="252.5" width="4.5" height="1.5" fill="#7d1677"/><rect x="787" y="254.0" width="4.5" height="3.5" fill="#a9315a"/><rect x="787" y="257.5" width="4.5" height="1.5" fill="#720e7f"/><rect x="787" y="259.0" width="4.5" height="3.5" fill="#942468"/><rect x="787" y="262.5" width="4.5" height="1.5" fill="#560b81"/><rect x="787.0" y="262" width="3.5" height="2" fill="#861b71"/><rect x="786.0" y="265" width="3.1" height="2.5" fill="#a32e5e"/><rect x="786.5" y="268.5" width="4.7" height="3" fill="#700d80"/><rect x="786.7" y="272.0" width="4.6" height="2" fill="#a9315a"/><rect x="787.0" y="276.0" width="3.9" height="2" fill="#922269"/><rect x="786.5" y="279.0" width="3.3" height="3" fill="#a02b60"/><rect x="786.0" y="282.0" width="3.8" height="2.5" fill="#730f7e"/><rect x="787.0" y="285.5" width="4.4" height="3" fill="#861b71"/><rect x="786.8" y="289.5" width="4.5" height="3" fill="#650b81"/><rect x="788.2" y="293.5" width="3.1" height="2" fill="#690b81"/><rect x="786.2" y="297.5" width="4.6" height="3" fill="#78127b"/><rect x="786.8" y="301.0" width="3.4" height="2.5" fill="#4c0b81"/><rect x="786.8" y="304.5" width="4.1" height="2" fill="#841a72"/><rect x="786.4" y="308.5" width="4.8" height="3" fill="#740f7d"/><rect x="786.3" y="312.5" width="4.5" height="2" fill="#480b81"/><rect x="786.8" y="316.5" width="3.6" height="2" fill="#350a80"/><rect x="786.7" y="320.5" width="4.4" height="2.5" fill="#5b0b81"/><rect x="786.5" y="324.0" width="3.5" height="3" fill="#600b81"/><rect x="786.1" y="328.0" width="3.5" height="2" fill="#640b81"/><rect x="786.1" y="331.5" width="4.7" height="3" fill="#3f0b81"/><rect x="786.0" y="334.5" width="4.8" height="2" fill="#7c1578"/><rect x="787.4" y="338.5" width="3.3" height="3" fill="#6c0b81"/><rect x="786.7" y="342.0" width="4.7" height="3" fill="#6f0d80"/><rect x="786.9" y="345.5" width="4.5" height="2" fill="#620b81"/><rect x="787.4" y="348.5" width="3.1" height="3" fill="#440b81"/><rect x="787.6" y="352.0" width="3.7" height="2" fill="#660b81"/><rect x="786.4" y="355.5" width="4.8" height="2" fill="#560b81"/><rect x="788.1" y="359.5" width="3.1" height="2.5" fill="#500b81"/><rect x="786.3" y="363.5" width="4.3" height="3" fill="#260a80"/><rect x="786.2" y="366.5" width="3.1" height="2.5" fill="#430b81"/><rect x="786.8" y="370.0" width="4.6" height="3" fill="#580b81"/><rect x="786.9" y="373.5" width="4.2" height="2.5" fill="#630b81"/><rect x="786.4" y="377.0" width="4.5" height="2" fill="#290a80"/><rect x="786.9" y="380.5" width="3.1" height="3" fill="#1b0a80"/><rect x="786.7" y="384.5" width="3.3" height="2" fill="#240a80"/><rect x="786.1" y="388.5" width="3.3" height="3" fill="#420b81"/><rect x="787.0" y="392.0" width="4.2" height="3" fill="#290a80"/><rect x="787.0" y="395.0" width="4.3" height="2" fill="#380a80"/><rect x="786.3" y="398.0" width="4.3" height="3" fill="#260a80"/><rect x="786.9" y="401.0" width="4.2" height="2.5" fill="#250a80"/><rect x="786.0" y="404.5" width="3.8" height="2" fill="#09086a"/><rect x="786.0" y="407.5" width="4.7" height="2.5" fill="#1e0a80"/><rect x="787.0" y="411.0" width="3.9" height="3" fill="#0a0975"/><rect x="786.6" y="414.5" width="4.7" height="2.5" fill="#090864"/><rect x="787.4" y="418.5" width="3.6" height="2" fill="#1f0a80"/><rect x="787.2" y="422.0" width="4.1" height="2.5" fill="#380a80"/><rect x="786.4" y="425.0" width="4.8" height="2.5" fill="#0a0871"/><rect x="787.8" y="429.0" width="3.7" height="2" fill="#0a0974"/><rect x="786.2" y="433.0" width="4.0" height="3" fill="#0a0871"/><rect x="786.5" y="436.5" width="3.4" height="3" fill="#060549"/><rect x="786.5" y="439.5" width="3.2" height="3" fill="#0d0a80"/><rect x="786.4" y="443.5" width="4.4" height="2.5" fill="#050545"/><rect x="787.8" y="447.5" width="3.6" height="2" fill="#0a0871"/><rect x="786.8" y="458.5" width="4.0" height="3" fill="#06064b"/><rect x="786.3" y="462.5" width="3.8" height="2" fill="#100a80"/><rect x="786.2" y="470.5" width="4.8" height="2" fill="#06064a"/><rect x="786.3" y="478.0" width="4.9" height="2.5" fill="#08075c"/><rect x="787.1" y="482.0" width="4.4" height="2" fill="#090867"/><rect x="786.1" y="489.5" width="3.6" height="2" fill="#170a80"/><rect x="786.6" y="497.5" width="4.9" height="2" fill="#0b0977"/><rect x="786.2" y="504.5" width="4.2" height="3" fill="#090865"/><rect x="786.4" y="512.0" width="3.1" height="2.5" fill="#080760"/><rect x="787.4" y="515.5" width="3.2" height="2.5" fill="#0b097e"/><rect x="786.8" y="523.0" width="3.4" height="2" fill="#170a80"/><rect x="786.0" y="530.0" width="3.3" height="2.5" fill="#1c0a80"/><rect x="786.8" y="534.0" width="3.9" height="2.5" fill="#0f0a80"/><rect x="787.1" y="545.0" width="3.7" height="2.5" fill="#060548"/><rect x="787.3" y="568.0" width="3.6" height="2.5" fill="#0b097c"/><rect x="786.1" y="571.5" width="4.9" height="2.5" fill="#08075c"/><rect x="786.6" y="579.0" width="4.8" height="3" fill="#050544"/><rect x="787.1" y="582.0" width="4.0" height="3" fill="#070757"/><rect x="786.2" y="586.0" width="4.1" height="3" fill="#0c0a80"/><rect x="787.7" y="598.0" width="3.3" height="3" fill="#0c0a80"/><rect x="787.1" y="605.5" width="3.6" height="2.5" fill="#05053e"/><rect x="786.4" y="613.0" width="4.8" height="2.5" fill="#090764"/><rect x="786.7" y="620.5" width="4.7" height="3" fill="#090865"/><rect x="786.7" y="624.0" width="3.4" height="2.5" fill="#0b097a"/><rect x="786.7" y="628.0" width="3.8" height="3" fill="#040433"/><rect x="787.3" y="632.0" width="3.4" height="2.5" fill="#060547"/><rect x="786.2" y="635.5" width="4.7" height="3" fill="#090865"/><rect x="787.5" y="639.0" width="3.4" height="3" fill="#0b097e"/><rect x="786.6" y="642.0" width="3.5" height="3" fill="#070757"/><rect x="786.2" y="653.5" width="4.0" height="3" fill="#08075a"/><rect x="786.2" y="660.5" width="4.5" height="2" fill="#040432"/><rect x="787.2" y="668.0" width="3.8" height="2" fill="#090763"/><rect x="786.4" y="671.0" width="4.5" height="2" fill="#08075e"/><rect x="786.3" y="674.5" width="4.6" height="2.5" fill="#070757"/><rect x="786.7" y="694.0" width="4.0" height="3" fill="#08075f"/><rect x="786.3" y="697.0" width="4.5" height="3" fill="#090869"/><rect x="787.9" y="700.5" width="3.4" height="3" fill="#060549"/><rect x="786.4" y="727.5" width="4.2" height="3" fill="#05053d"/><rect x="786.9" y="730.5" width="4.5" height="2" fill="#0a086f"/><rect x="787.8" y="737.5" width="3.2" height="2" fill="#070650"/><rect x="787.3" y="741.0" width="3.1" height="2" fill="#070655"/><rect x="787.9" y="744.5" width="3.2" height="3" fill="#040436"/><rect x="787.1" y="756.0" width="4.3" height="3" fill="#040433"/><rect x="786.4" y="767.0" width="4.9" height="2" fill="#040438"/><rect x="787.0" y="771.0" width="4.0" height="2" fill="#040436"/><rect x="786.4" y="774.5" width="4.6" height="2.5" fill="#080762"/><rect x="786.3" y="778.5" width="5.0" height="2" fill="#040434"/><rect x="533" y="158.0" width="3" height="3.0" fill="#1d0a80"/><rect x="533" y="161.0" width="3" height="1.5" fill="#050540"/><rect x="533" y="162.5" width="3" height="3.5" fill="#6d0b81"/><rect x="533" y="166.0" width="3" height="1.5" fill="#1f0a80"/><rect x="533" y="167.5" width="3" height="2.5" fill="#ab3359"/><rect x="533" y="170.0" width="3" height="1.5" fill="#730f7e"/><rect x="533" y="171.5" width="3" height="2.5" fill="#ae3655"/><rect x="533" y="174.0" width="3" height="1.5" fill="#76117c"/><rect x="533" y="175.5" width="3" height="2.5" fill="#811874"/><rect x="533" y="178.0" width="3" height="1.5" fill="#3b0a80"/><rect x="533" y="179.5" width="3" height="3.0" fill="#0b0979"/><rect x="533" y="182.5" width="3" height="1.5" fill="#040433"/></g><g filter="url(#b1)"><ellipse cx="9" cy="169" rx="2.5" ry="3" fill="#ffa030" opacity="0.9"/><path d="M495 197 L489 209" stroke="#e07030" stroke-width="2.5" opacity="0.85"/><ellipse cx="536" cy="168" rx="2" ry="2.5" fill="#c05060" opacity="0.9"/><ellipse cx="796" cy="174.5" rx="4" ry="2.4" fill="#ffc060"/><rect x="507" y="176" width="12" height="3" fill="#f08020" opacity="0.8"/></g><g filter="url(#b05)"><linearGradient id="mb" x1="0" y1="0" x2="0" y2="1"><stop offset="0" stop-color="#f07020"/><stop offset="0.15" stop-color="#ffd000"/><stop offset="0.3" stop-color="#fff6c0"/><stop offset="0.8" stop-color="#ffffff"/><stop offset="1" stop-color="#ffd020"/></linearGradient><rect x="511.7" y="131" width="6" height="54" fill="url(#mb)"/><rect x="518.5" y="172" width="5" height="18" fill="#ffb020" opacity="0.9"/><path d="M511.5 187.5 L525 188.5 L539 192.5 L546 195.5 L549 197.5 L541 199 L511.5 199.5 Z" fill="#ffffff"/><path d="M539 194.5 L548.5 197.5 L540 199 Z" fill="#ffb030"/><linearGradient id="wb" x1="0" y1="0" x2="0" y2="1"><stop offset="0" stop-color="#ffd040"/><stop offset="0.2" stop-color="#fff8d0"/><stop offset="0.5" stop-color="#ffffff"/><stop offset="0.8" stop-color="#fff8d0"/><stop offset="1" stop-color="#ffd040"/></linearGradient><ellipse cx="789.3" cy="174" rx="3.6" ry="10" fill="url(#wb)"/></g><circle cx="535.5" cy="194" r="0.9" fill="#000"/><g filter="url(#b05)"><rect x="514" y="763.5" width="12" height="2.2" fill="#ff6a90"/><rect x="512" y="762" width="4" height="5" fill="#5020a0" opacity="0.7"/><rect x="526" y="763" width="6" height="3" fill="#3020a0" opacity="0.7"/></g></svg></div><div id="tbox" class="abs"><div style="top:0">Screen Capture Time: 2025-12-14 07:51:43 UTC</div><div style="top:14px">143048017 Hz</div><div style="top:28px">Config = V8</div></div><div id="cb" class="abs"><div id="grad" class="abs"></div><svg width="99" height="39" style="position:absolute;left:0;top:0"><rect x="0" y="16" width="99" height="1.5" fill="#111"/><rect x="3" y="16" width="1" height="4" fill="#111"/><rect x="8" y="16" width="1" height="4" fill="#111"/><rect x="12" y="16" width="1" height="4" fill="#111"/><rect x="16" y="16" width="1" height="4" fill="#111"/><rect x="21" y="16" width="1" height="7" fill="#111"/><rect x="25" y="16" width="1" height="4" fill="#111"/><rect x="30" y="16" width="1" height="4" fill="#111"/><rect x="34" y="16" width="1" height="4" fill="#111"/><rect x="38" y="16" width="1" height="4" fill="#111"/><rect x="43" y="16" width="1" height="10" fill="#111"/><rect x="47" y="16" width="1" height="4" fill="#111"/><rect x="52" y="16" width="1" height="4" fill="#111"/><rect x="56" y="16" width="1" height="4" fill="#111"/><rect x="60" y="16" width="1" height="4" fill="#111"/><rect x="65" y="16" width="1" height="7" fill="#111"/><rect x="69" y="16" width="1" height="4" fill="#111"/><rect x="74" y="16" width="1" height="4" fill="#111"/><rect x="78" y="16" width="1" height="4" fill="#111"/><rect x="82" y="16" width="1" height="4" fill="#111"/><rect x="87" y="16" width="1" height="10" fill="#111"/><rect x="91" y="16" width="1" height="4" fill="#111"/><rect x="96" y="16" width="1" height="4" fill="#111"/></svg><div class="cbt" style="left:0">-80</div><div class="cbt" style="left:18px">dB</div><div class="cbt" style="left:34.5px">-60</div><div class="cbt" style="left:78.8px">-40</div></div><div class="tl" style="left:48px;top:779.5px">2025-12-14 07:50:30</div><div class="tk" style="left:61px"></div><div class="tl" style="left:161px;top:779.5px">2025-12-14 07:50:40</div><div class="tk" style="left:174px"></div><div class="tl" style="left:276px;top:779.5px">2025-12-14 07:50:50</div><div class="tk" style="left:289px"></div><div class="tl" style="left:336px;top:779.5px">2025-12-14 07:51:00</div><div class="tk" style="left:349px"></div><div class="tl" style="left:451px;top:779.5px">2025-12-14 07:51:10</div><div class="tk" style="left:464px"></div><div class="tl" style="left:565px;top:779.5px">2025-12-14 07:51:20</div><div class="tk" style="left:578px"></div><div class="tl" style="left:669px;top:779.5px">2025-12-14 07:51:30</div><div class="tk" style="left:682px"></div><div class="tl" style="left:770px;top:779.5px">2025-12-14 07:51:40</div><div class="tk" style="left:783px"></div><svg width="42" height="783" style="position:absolute;left:818px;top:0"><rect x="0" y="2" width="11" height="1" fill="#000"/><rect x="0" y="10" width="8" height="1" fill="#000"/><rect x="0" y="18" width="8" height="1" fill="#000"/><rect x="0" y="25" width="8" height="1" fill="#000"/><rect x="0" y="33" width="8" height="1" fill="#000"/><rect x="0" y="41" width="8" height="1" fill="#000"/><rect x="0" y="49" width="8" height="1" fill="#000"/><rect x="0" y="57" width="8" height="1" fill="#000"/><rect x="0" y="64" width="8" height="1" fill="#000"/><rect x="0" y="72" width="8" height="1" fill="#000"/><rect x="0" y="80" width="26" height="1" fill="#000"/><rect x="0" y="88" width="8" height="1" fill="#000"/><rect x="0" y="96" width="8" height="1" fill="#000"/><rect x="0" y="103" width="8" height="1" fill="#000"/><rect x="0" y="111" width="8" height="1" fill="#000"/><rect x="0" y="119" width="8" height="1" fill="#000"/><rect x="0" y="127" width="8" height="1" fill="#000"/><rect x="0" y="135" width="8" height="1" fill="#000"/><rect x="0" y="142" width="8" height="1" fill="#000"/><rect x="0" y="150" width="8" height="1" fill="#000"/><rect x="0" y="158" width="11" height="1" fill="#000"/><rect x="0" y="166" width="8" height="1" fill="#000"/><rect x="0" y="174" width="8" height="1" fill="#000"/><rect x="0" y="182" width="8" height="1" fill="#000"/><rect x="0" y="189" width="8" height="1" fill="#000"/><rect x="0" y="197" width="8" height="1" fill="#000"/><rect x="0" y="205" width="8" height="1" fill="#000"/><rect x="0" y="213" width="8" height="1" fill="#000"/><rect x="0" y="221" width="8" height="1" fill="#000"/><rect x="0" y="228" width="8" height="1" fill="#000"/><rect x="0" y="236" width="26" height="1" fill="#000"/><rect x="0" y="244" width="8" height="1" fill="#000"/><rect x="0" y="252" width="8" height="1" fill="#000"/><rect x="0" y="260" width="8" height="1" fill="#000"/><rect x="0" y="268" width="8" height="1" fill="#000"/><rect x="0" y="275" width="8" height="1" fill="#000"/><rect x="0" y="283" width="8" height="1" fill="#000"/><rect x="0" y="291" width="8" height="1" fill="#000"/><rect x="0" y="299" width="8" height="1" fill="#000"/><rect x="0" y="307" width="8" height="1" fill="#000"/><rect x="0" y="314" width="11" height="1" fill="#000"/><rect x="0" y="322" width="8" height="1" fill="#000"/><rect x="0" y="330" width="8" height="1" fill="#000"/><rect x="0" y="338" width="8" height="1" fill="#000"/><rect x="0" y="346" width="8" height="1" fill="#000"/><rect x="0" y="353" width="8" height="1" fill="#000"/><rect x="0" y="361" width="8" height="1" fill="#000"/><rect x="0" y="369" width="8" height="1" fill="#000"/><rect x="0" y="377" width="8" height="1" fill="#000"/><rect x="0" y="385" width="8" height="1" fill="#000"/><rect x="0" y="392" width="26" height="1" fill="#000"/><rect x="0" y="400" width="8" height="1" fill="#000"/><rect x="0" y="408" width="8" height="1" fill="#000"/><rect x="0" y="416" width="8" height="1" fill="#000"/><rect x="0" y="424" width="8" height="1" fill="#000"/><rect x="0" y="432" width="8" height="1" fill="#000"/><rect x="0" y="439" width="8" height="1" fill="#000"/><rect x="0" y="447" width="8" height="1" fill="#000"/><rect x="0" y="455" width="8" height="1" fill="#000"/><rect x="0" y="463" width="8" height="1" fill="#000"/><rect x="0" y="471" width="11" height="1" fill="#000"/><rect x="0" y="478" width="8" height="1" fill="#000"/><rect x="0" y="486" width="8" height="1" fill="#000"/><rect x="0" y="494" width="8" height="1" fill="#000"/><rect x="0" y="502" width="8" height="1" fill="#000"/><rect x="0" y="510" width="8" height="1" fill="#000"/><rect x="0" y="518" width="8" height="1" fill="#000"/><rect x="0" y="525" width="8" height="1" fill="#000"/><rect x="0" y="533" width="8" height="1" fill="#000"/><rect x="0" y="541" width="8" height="1" fill="#000"/><rect x="0" y="549" width="26" height="1" fill="#000"/><rect x="0" y="557" width="8" height="1" fill="#000"/><rect x="0" y="564" width="8" height="1" fill="#000"/><rect x="0" y="572" width="8" height="1" fill="#000"/><rect x="0" y="580" width="8" height="1" fill="#000"/><rect x="0" y="588" width="8" height="1" fill="#000"/><rect x="0" y="596" width="8" height="1" fill="#000"/><rect x="0" y="603" width="8" height="1" fill="#000"/><rect x="0" y="611" width="8" height="1" fill="#000"/><rect x="0" y="619" width="8" height="1" fill="#000"/><rect x="0" y="627" width="11" height="1" fill="#000"/><rect x="0" y="635" width="8" height="1" fill="#000"/><rect x="0" y="642" width="8" height="1" fill="#000"/><rect x="0" y="650" width="8" height="1" fill="#000"/><rect x="0" y="658" width="8" height="1" fill="#000"/><rect x="0" y="666" width="8" height="1" fill="#000"/><rect x="0" y="674" width="8" height="1" fill="#000"/><rect x="0" y="682" width="8" height="1" fill="#000"/><rect x="0" y="689" width="8" height="1" fill="#000"/><rect x="0" y="697" width="8" height="1" fill="#000"/><rect x="0" y="705" width="26" height="1" fill="#000"/><rect x="0" y="713" width="8" height="1" fill="#000"/><rect x="0" y="721" width="8" height="1" fill="#000"/><rect x="0" y="728" width="8" height="1" fill="#000"/><rect x="0" y="736" width="8" height="1" fill="#000"/><rect x="0" y="744" width="8" height="1" fill="#000"/><rect x="0" y="752" width="8" height="1" fill="#000"/><rect x="0" y="760" width="8" height="1" fill="#000"/><rect x="0" y="768" width="8" height="1" fill="#000"/><rect x="0" y="775" width="8" height="1" fill="#000"/><polyline points="5.5,5.5 21.5,13.5 21.5,10 21.5,769.5 4,779" fill="none" stroke="#1a1a9a" stroke-width="1"/></svg><div class="fl" style="left:858px;top:49.2px">143050400</div><div class="fl" style="left:858px;top:205.2px">143050200</div><div class="fl" style="left:858px;top:361.2px">143050000</div><div class="fl" style="left:858px;top:518.2px">143049800</div><div class="fl" style="left:858px;top:663.9px">143049600 Hz</div><svg width="80" height="783" style="position:absolute;left:860px;top:0"><rect x="0" y="1" width="80" height="781" fill="#5a5a5a"/><rect x="0" y="1" width="80" height="1" fill="#000"/><rect x="0" y="2" width="80" height="1" fill="#9a9a9a"/><rect x="0" y="3" width="80" height="6" fill="#000"/><rect x="0" y="774" width="80" height="8" fill="#000"/><rect x="0" y="19" width="14" height="2" fill="#040408"/><rect x="8" y="19" width="5" height="1" fill="#7a7a7a"/><rect x="0" y="21" width="9" height="1" fill="#0c0c48"/><rect x="0" y="22" width="7" height="1" fill="#040408"/><rect x="3" y="22" width="2" height="1" fill="#7a7a7a"/><rect x="0" y="23" width="17" height="1" fill="#0c0c48"/><rect x="8" y="23" width="5" height="1" fill="#7a7a7a"/><rect x="0" y="24" width="14" height="1" fill="#040408"/><rect x="0" y="25" width="14" height="1" fill="#0c0c48"/><rect x="0" y="26" width="8" height="3" fill="#040408"/><rect x="0" y="29" width="8" height="2" fill="#040408"/><rect x="3" y="29" width="2" height="1" fill="#7a7a7a"/><rect x="0" y="31" width="7" height="3" fill="#0c0c48"/><rect x="4" y="31" width="2" height="1" fill="#7a7a7a"/><rect x="0" y="34" width="18" height="2" fill="#040408"/><rect x="0" y="36" width="11" height="2" fill="#040408"/><rect x="0" y="38" width="8" height="2" fill="#040408"/><rect x="0" y="40" width="17" height="2" fill="#040408"/><rect x="0" y="42" width="14" height="1" fill="#0c0c48"/><rect x="8" y="42" width="5" height="1" fill="#7a7a7a"/><rect x="0" y="43" width="7" height="2" fill="#040408"/><rect x="0" y="45" width="18" height="3" fill="#040408"/><rect x="7" y="45" width="5" height="1" fill="#7a7a7a"/><rect x="0" y="48" width="15" height="2" fill="#040408"/><rect x="0" y="50" width="13" height="2" fill="#040408"/><rect x="7" y="50" width="5" height="1" fill="#7a7a7a"/><rect x="0" y="52" width="15" height="3" fill="#040408"/><rect x="0" y="55" width="12" height="3" fill="#040408"/><rect x="5" y="55" width="4" height="1" fill="#7a7a7a"/><rect x="0" y="58" width="16" height="2" fill="#040408"/><rect x="6" y="58" width="4" height="1" fill="#7a7a7a"/><rect x="0" y="60" width="10" height="3" fill="#040408"/><rect x="0" y="63" width="9" height="1" fill="#040408"/><rect x="3" y="63" width="2" height="1" fill="#7a7a7a"/><rect x="0" y="64" width="20" height="2" fill="#040408"/><rect x="0" y="66" width="17" height="2" fill="#040408"/><rect x="6" y="66" width="4" height="1" fill="#7a7a7a"/><rect x="0" y="68" width="11" height="2" fill="#0c0c48"/><rect x="0" y="70" width="10" height="3" fill="#040408"/><rect x="5" y="70" width="3" height="1" fill="#7a7a7a"/><rect x="0" y="73" width="16" height="3" fill="#040408"/><rect x="0" y="76" width="22" height="3" fill="#040408"/><rect x="0" y="79" width="22" height="2" fill="#040408"/><rect x="0" y="81" width="17" height="4" fill="#040408"/><rect x="0" y="85" width="18" height="2" fill="#0c0c48"/><rect x="7" y="85" width="4" height="1" fill="#7a7a7a"/><rect x="0" y="87" width="9" height="2" fill="#040408"/><rect x="4" y="87" width="3" height="1" fill="#7a7a7a"/><rect x="0" y="89" width="9" height="3" fill="#040408"/><rect x="5" y="89" width="3" height="1" fill="#7a7a7a"/><rect x="0" y="92" width="14" height="3" fill="#040408"/><rect x="0" y="95" width="15" height="3" fill="#0c0c48"/><rect x="0" y="98" width="17" height="2" fill="#040408"/><rect x="9" y="98" width="6" height="1" fill="#7a7a7a"/><rect x="0" y="100" width="13" height="3" fill="#040408"/><rect x="4" y="100" width="3" height="1" fill="#7a7a7a"/><rect x="0" y="103" width="15" height="3" fill="#040408"/><rect x="0" y="106" width="18" height="4" fill="#040408"/><rect x="0" y="110" width="24" height="3" fill="#040408"/><rect x="0" y="113" width="23" height="2" fill="#040408"/><rect x="0" y="115" width="21" height="2" fill="#040408"/><rect x="0" y="117" width="25" height="4" fill="#040408"/><rect x="0" y="121" width="24" height="3" fill="#0c0c48"/><rect x="0" y="124" width="9" height="3" fill="#0c0c48"/><rect x="4" y="124" width="2" height="1" fill="#7a7a7a"/><rect x="0" y="127" width="22" height="3" fill="#040408"/><rect x="0" y="130" width="31" height="3" fill="#040408"/><rect x="0" y="133" width="12" height="2" fill="#040408"/><rect x="5" y="133" width="4" height="1" fill="#7a7a7a"/><rect x="0" y="135" width="30" height="3" fill="#040408"/><rect x="0" y="138" width="26" height="4" fill="#040408"/><rect x="11" y="138" width="7" height="1" fill="#7a7a7a"/><rect x="0" y="142" width="31" height="3" fill="#040408"/><rect x="17" y="142" width="11" height="1" fill="#7a7a7a"/><rect x="0" y="145" width="15" height="2" fill="#040408"/><rect x="0" y="147" width="24" height="2" fill="#040408"/><rect x="0" y="149" width="43" height="2" fill="#0c0c48"/><rect x="0" y="151" width="38" height="2" fill="#0c0c48"/><rect x="0" y="153" width="35" height="2" fill="#040408"/><rect x="0" y="155" width="15" height="2" fill="#040408"/><rect x="0" y="157" width="33" height="1" fill="#040408"/><rect x="0" y="158" width="22" height="4" fill="#040408"/><rect x="8" y="158" width="5" height="1" fill="#7a7a7a"/><rect x="0" y="162" width="14" height="3" fill="#040408"/><rect x="6" y="162" width="4" height="1" fill="#7a7a7a"/><rect x="0" y="165" width="10" height="2" fill="#040408"/><rect x="0" y="167" width="20" height="3" fill="#040408"/><rect x="0" y="170" width="11" height="3" fill="#0c0c48"/><rect x="0" y="173" width="18" height="4" fill="#0c0c48"/><rect x="9" y="173" width="6" height="1" fill="#7a7a7a"/><rect x="0" y="177" width="12" height="2" fill="#040408"/><rect x="4" y="177" width="2" height="1" fill="#7a7a7a"/><rect x="0" y="179" width="19" height="3" fill="#040408"/><rect x="0" y="182" width="26" height="1" fill="#0c0c48"/><rect x="8" y="182" width="5" height="1" fill="#7a7a7a"/><rect x="0" y="183" width="19" height="1" fill="#040408"/><rect x="0" y="184" width="18" height="1" fill="#040408"/><rect x="0" y="185" width="13" height="3" fill="#040408"/><rect x="0" y="188" width="18" height="4" fill="#040408"/><rect x="0" y="192" width="27" height="2" fill="#040408"/><rect x="12" y="192" width="8" height="1" fill="#7a7a7a"/><rect x="0" y="194" width="11" height="2" fill="#040408"/><rect x="4" y="194" width="3" height="1" fill="#7a7a7a"/><rect x="0" y="196" width="13" height="1" fill="#040408"/><rect x="7" y="196" width="5" height="1" fill="#7a7a7a"/><rect x="0" y="197" width="22" height="3" fill="#040408"/><rect x="7" y="197" width="5" height="1" fill="#7a7a7a"/><rect x="0" y="200" width="20" height="2" fill="#040408"/><rect x="0" y="202" width="17" height="2" fill="#040408"/><rect x="9" y="202" width="6" height="1" fill="#7a7a7a"/><rect x="0" y="204" width="23" height="3" fill="#040408"/><rect x="0" y="207" width="30" height="1" fill="#0c0c48"/><rect x="0" y="208" width="30" height="2" fill="#040408"/><rect x="0" y="210" width="24" height="2" fill="#0c0c48"/><rect x="0" y="212" width="16" height="4" fill="#040408"/><rect x="6" y="212" width="4" height="1" fill="#7a7a7a"/><rect x="0" y="216" width="14" height="4" fill="#040408"/><rect x="0" y="220" width="29" height="4" fill="#040408"/><rect x="10" y="220" width="7" height="1" fill="#7a7a7a"/><rect x="0" y="224" width="21" height="3" fill="#040408"/><rect x="7" y="224" width="4" height="1" fill="#7a7a7a"/><rect x="0" y="227" width="12" height="3" fill="#040408"/><rect x="4" y="227" width="2" height="1" fill="#7a7a7a"/><rect x="0" y="230" width="24" height="1" fill="#0c0c48"/><rect x="0" y="231" width="13" height="1" fill="#0c0c48"/><rect x="8" y="231" width="5" height="1" fill="#7a7a7a"/><rect x="0" y="232" width="26" height="2" fill="#040408"/><rect x="12" y="232" width="8" height="1" fill="#7a7a7a"/><rect x="0" y="234" width="26" height="2" fill="#040408"/><rect x="9" y="234" width="6" height="1" fill="#7a7a7a"/><rect x="0" y="236" width="20" height="2" fill="#040408"/><rect x="9" y="236" width="6" height="1" fill="#7a7a7a"/><rect x="0" y="238" width="11" height="3" fill="#040408"/><rect x="4" y="238" width="3" height="1" fill="#7a7a7a"/><rect x="0" y="241" width="8" height="1" fill="#040408"/><rect x="0" y="242" width="16" height="3" fill="#040408"/><rect x="9" y="242" width="6" height="1" fill="#7a7a7a"/><rect x="0" y="245" width="18" height="2" fill="#040408"/><rect x="0" y="247" width="12" height="3" fill="#0c0c48"/><rect x="4" y="247" width="3" height="1" fill="#7a7a7a"/><rect x="0" y="250" width="19" height="3" fill="#0c0c48"/><rect x="0" y="253" width="21" height="1" fill="#0c0c48"/><rect x="0" y="254" width="14" height="2" fill="#0c0c48"/><rect x="0" y="256" width="21" height="2" fill="#040408"/><rect x="8" y="256" width="5" height="1" fill="#7a7a7a"/><rect x="0" y="258" width="8" height="2" fill="#0c0c48"/><rect x="2" y="258" width="2" height="1" fill="#7a7a7a"/><rect x="0" y="260" width="23" height="2" fill="#040408"/><rect x="0" y="262" width="8" height="2" fill="#040408"/><rect x="3" y="262" width="2" height="1" fill="#7a7a7a"/><rect x="0" y="264" width="13" height="2" fill="#040408"/><rect x="0" y="266" width="10" height="2" fill="#040408"/><rect x="6" y="266" width="4" height="1" fill="#7a7a7a"/><rect x="0" y="268" width="12" height="2" fill="#0c0c48"/><rect x="5" y="268" width="3" height="1" fill="#7a7a7a"/><rect x="0" y="270" width="8" height="2" fill="#040408"/><rect x="0" y="272" width="16" height="2" fill="#040408"/><rect x="0" y="274" width="18" height="2" fill="#040408"/><rect x="0" y="276" width="17" height="2" fill="#040408"/><rect x="9" y="276" width="6" height="1" fill="#7a7a7a"/><rect x="0" y="278" width="16" height="3" fill="#040408"/><rect x="0" y="281" width="20" height="2" fill="#040408"/><rect x="0" y="283" width="18" height="4" fill="#040408"/><rect x="0" y="287" width="17" height="3" fill="#040408"/><rect x="5" y="287" width="3" height="1" fill="#7a7a7a"/><rect x="0" y="290" width="16" height="2" fill="#040408"/><rect x="0" y="292" width="15" height="2" fill="#040408"/><rect x="0" y="294" width="10" height="3" fill="#040408"/><rect x="0" y="297" width="17" height="1" fill="#040408"/><rect x="0" y="298" width="14" height="3" fill="#040408"/><rect x="0" y="301" width="7" height="4" fill="#040408"/><rect x="0" y="305" width="10" height="2" fill="#040408"/><rect x="0" y="307" width="12" height="4" fill="#040408"/><rect x="0" y="311" width="7" height="4" fill="#040408"/><rect x="3" y="311" width="2" height="1" fill="#7a7a7a"/><rect x="0" y="315" width="10" height="2" fill="#040408"/><rect x="5" y="315" width="3" height="1" fill="#7a7a7a"/><rect x="0" y="317" width="13" height="1" fill="#040408"/><rect x="0" y="318" width="16" height="1" fill="#040408"/><rect x="7" y="318" width="5" height="1" fill="#7a7a7a"/><rect x="0" y="319" width="13" height="2" fill="#040408"/><rect x="0" y="321" width="9" height="3" fill="#040408"/><rect x="0" y="324" width="11" height="1" fill="#0c0c48"/><rect x="0" y="325" width="21" height="2" fill="#040408"/><rect x="0" y="327" width="7" height="2" fill="#0c0c48"/><rect x="0" y="329" width="20" height="2" fill="#0c0c48"/><rect x="0" y="331" width="10" height="3" fill="#0c0c48"/><rect x="0" y="334" width="19" height="2" fill="#040408"/><rect x="6" y="334" width="4" height="1" fill="#7a7a7a"/><rect x="0" y="336" width="16" height="2" fill="#040408"/><rect x="0" y="338" width="11" height="2" fill="#040408"/><rect x="0" y="340" width="11" height="1" fill="#040408"/><rect x="0" y="341" width="17" height="2" fill="#040408"/><rect x="7" y="341" width="5" height="1" fill="#7a7a7a"/><rect x="0" y="343" width="12" height="2" fill="#040408"/><rect x="7" y="343" width="5" height="1" fill="#7a7a7a"/><rect x="0" y="345" width="10" height="4" fill="#0c0c48"/><rect x="6" y="345" width="4" height="1" fill="#7a7a7a"/><rect x="0" y="349" width="16" height="2" fill="#0c0c48"/><rect x="0" y="351" width="14" height="2" fill="#0c0c48"/><rect x="0" y="353" width="19" height="2" fill="#040408"/><rect x="0" y="355" width="14" height="3" fill="#040408"/><rect x="7" y="355" width="5" height="1" fill="#7a7a7a"/><rect x="0" y="358" width="15" height="2" fill="#0c0c48"/><rect x="0" y="360" width="7" height="2" fill="#040408"/><rect x="3" y="360" width="2" height="1" fill="#7a7a7a"/><rect x="0" y="362" width="10" height="2" fill="#040408"/><rect x="0" y="364" width="10" height="3" fill="#040408"/><rect x="5" y="364" width="3" height="1" fill="#7a7a7a"/><rect x="0" y="367" width="8" height="2" fill="#040408"/><rect x="4" y="367" width="2" height="1" fill="#7a7a7a"/><rect x="0" y="369" width="14" height="4" fill="#0c0c48"/><rect x="0" y="373" width="13" height="4" fill="#0c0c48"/><rect x="4" y="373" width="3" height="1" fill="#7a7a7a"/><rect x="0" y="377" width="14" height="2" fill="#040408"/><rect x="0" y="379" width="15" height="4" fill="#040408"/><rect x="0" y="383" width="12" height="2" fill="#040408"/><rect x="5" y="383" width="3" height="1" fill="#7a7a7a"/><rect x="0" y="385" width="7" height="4" fill="#040408"/><rect x="0" y="389" width="16" height="2" fill="#040408"/><rect x="0" y="391" width="10" height="4" fill="#040408"/><rect x="4" y="391" width="3" height="1" fill="#7a7a7a"/><rect x="0" y="395" width="13" height="2" fill="#040408"/><rect x="0" y="397" width="8" height="1" fill="#040408"/><rect x="0" y="398" width="13" height="4" fill="#040408"/><rect x="5" y="398" width="4" height="1" fill="#7a7a7a"/><rect x="0" y="402" width="14" height="4" fill="#040408"/><rect x="0" y="406" width="8" height="4" fill="#0c0c48"/><rect x="0" y="410" width="8" height="3" fill="#040408"/><rect x="0" y="413" width="17" height="4" fill="#040408"/><rect x="0" y="417" width="6" height="1" fill="#0c0c48"/><rect x="0" y="418" width="15" height="1" fill="#040408"/><rect x="6" y="418" width="4" height="1" fill="#7a7a7a"/><rect x="0" y="419" width="12" height="3" fill="#040408"/><rect x="5" y="419" width="3" height="1" fill="#7a7a7a"/><rect x="0" y="422" width="9" height="3" fill="#040408"/><rect x="0" y="425" width="6" height="1" fill="#040408"/><rect x="0" y="426" width="15" height="2" fill="#040408"/><rect x="0" y="428" width="14" height="2" fill="#0c0c48"/><rect x="0" y="430" width="10" height="3" fill="#0c0c48"/><rect x="0" y="433" width="15" height="3" fill="#0c0c48"/><rect x="6" y="433" width="4" height="1" fill="#7a7a7a"/><rect x="0" y="436" width="9" height="2" fill="#0c0c48"/><rect x="4" y="436" width="3" height="1" fill="#7a7a7a"/><rect x="0" y="438" width="12" height="3" fill="#0c0c48"/><rect x="6" y="438" width="4" height="1" fill="#7a7a7a"/><rect x="0" y="441" width="9" height="1" fill="#040408"/><rect x="5" y="441" width="3" height="1" fill="#7a7a7a"/><rect x="0" y="442" width="12" height="2" fill="#040408"/><rect x="0" y="444" width="19" height="1" fill="#040408"/><rect x="7" y="444" width="5" height="1" fill="#7a7a7a"/><rect x="0" y="445" width="18" height="2" fill="#0c0c48"/><rect x="0" y="447" width="7" height="2" fill="#0c0c48"/><rect x="0" y="449" width="7" height="2" fill="#0c0c48"/><rect x="0" y="451" width="18" height="3" fill="#040408"/><rect x="0" y="454" width="10" height="2" fill="#0c0c48"/><rect x="0" y="456" width="12" height="3" fill="#040408"/><rect x="0" y="459" width="11" height="4" fill="#040408"/><rect x="3" y="459" width="2" height="1" fill="#7a7a7a"/><rect x="0" y="463" width="7" height="2" fill="#040408"/><rect x="0" y="465" width="19" height="3" fill="#0c0c48"/><rect x="0" y="468" width="10" height="4" fill="#040408"/><rect x="5" y="468" width="3" height="1" fill="#7a7a7a"/><rect x="0" y="472" width="11" height="2" fill="#040408"/><rect x="4" y="472" width="3" height="1" fill="#7a7a7a"/><rect x="0" y="474" width="6" height="2" fill="#040408"/><rect x="0" y="476" width="11" height="4" fill="#040408"/><rect x="0" y="480" width="18" height="4" fill="#040408"/><rect x="0" y="484" width="10" height="3" fill="#040408"/><rect x="0" y="487" width="6" height="3" fill="#040408"/><rect x="0" y="490" width="10" height="2" fill="#040408"/><rect x="0" y="492" width="14" height="4" fill="#040408"/><rect x="5" y="492" width="3" height="1" fill="#7a7a7a"/><rect x="0" y="496" width="15" height="2" fill="#040408"/><rect x="0" y="498" width="9" height="4" fill="#040408"/><rect x="0" y="502" width="8" height="2" fill="#040408"/><rect x="0" y="504" width="15" height="4" fill="#0c0c48"/><rect x="8" y="504" width="6" height="1" fill="#7a7a7a"/><rect x="0" y="508" width="10" height="2" fill="#040408"/><rect x="4" y="508" width="3" height="1" fill="#7a7a7a"/><rect x="0" y="510" width="8" height="4" fill="#040408"/><rect x="0" y="514" width="13" height="2" fill="#040408"/><rect x="0" y="516" width="19" height="1" fill="#040408"/><rect x="6" y="516" width="4" height="1" fill="#7a7a7a"/><rect x="0" y="517" width="19" height="2" fill="#040408"/><rect x="6" y="517" width="4" height="1" fill="#7a7a7a"/><rect x="0" y="519" width="14" height="2" fill="#040408"/><rect x="0" y="521" width="16" height="4" fill="#040408"/><rect x="0" y="525" width="10" height="2" fill="#040408"/><rect x="0" y="527" width="9" height="3" fill="#040408"/><rect x="3" y="527" width="2" height="1" fill="#7a7a7a"/><rect x="0" y="530" width="17" height="2" fill="#040408"/><rect x="7" y="530" width="5" height="1" fill="#7a7a7a"/><rect x="0" y="532" width="12" height="2" fill="#0c0c48"/><rect x="0" y="534" width="12" height="3" fill="#0c0c48"/><rect x="7" y="534" width="4" height="1" fill="#7a7a7a"/><rect x="0" y="537" width="16" height="2" fill="#040408"/><rect x="6" y="537" width="4" height="1" fill="#7a7a7a"/><rect x="0" y="539" width="6" height="1" fill="#040408"/><rect x="0" y="540" width="18" height="2" fill="#040408"/><rect x="0" y="542" width="13" height="2" fill="#040408"/><rect x="0" y="544" width="7" height="1" fill="#040408"/><rect x="0" y="545" width="6" height="2" fill="#040408"/><rect x="4" y="545" width="2" height="1" fill="#7a7a7a"/><rect x="0" y="547" width="13" height="1" fill="#040408"/><rect x="4" y="547" width="3" height="1" fill="#7a7a7a"/><rect x="0" y="548" width="11" height="2" fill="#040408"/><rect x="0" y="550" width="8" height="1" fill="#040408"/><rect x="0" y="551" width="11" height="1" fill="#040408"/><rect x="0" y="552" width="14" height="2" fill="#0c0c48"/><rect x="7" y="552" width="5" height="1" fill="#7a7a7a"/><rect x="0" y="554" width="18" height="2" fill="#040408"/><rect x="0" y="556" width="10" height="1" fill="#040408"/><rect x="0" y="557" width="6" height="2" fill="#040408"/><rect x="0" y="559" width="8" height="3" fill="#040408"/><rect x="2" y="559" width="2" height="1" fill="#7a7a7a"/><rect x="0" y="562" width="11" height="2" fill="#040408"/><rect x="0" y="564" width="11" height="2" fill="#0c0c48"/><rect x="5" y="564" width="4" height="1" fill="#7a7a7a"/><rect x="0" y="566" width="16" height="3" fill="#040408"/><rect x="0" y="569" width="15" height="2" fill="#0c0c48"/><rect x="5" y="569" width="3" height="1" fill="#7a7a7a"/><rect x="0" y="571" width="17" height="2" fill="#0c0c48"/><rect x="0" y="573" width="16" height="4" fill="#040408"/><rect x="9" y="573" width="6" height="1" fill="#7a7a7a"/><rect x="0" y="577" width="18" height="1" fill="#040408"/><rect x="10" y="577" width="7" height="1" fill="#7a7a7a"/><rect x="0" y="578" width="7" height="2" fill="#040408"/><rect x="0" y="580" width="14" height="2" fill="#040408"/><rect x="0" y="582" width="16" height="3" fill="#040408"/><rect x="6" y="582" width="4" height="1" fill="#7a7a7a"/><rect x="0" y="585" width="17" height="2" fill="#0c0c48"/><rect x="0" y="587" width="9" height="2" fill="#040408"/><rect x="0" y="589" width="17" height="1" fill="#040408"/><rect x="0" y="590" width="16" height="3" fill="#0c0c48"/><rect x="0" y="593" width="16" height="3" fill="#040408"/><rect x="0" y="596" width="13" height="2" fill="#040408"/><rect x="0" y="598" width="12" height="2" fill="#0c0c48"/><rect x="7" y="598" width="5" height="1" fill="#7a7a7a"/><rect x="0" y="600" width="9" height="2" fill="#040408"/><rect x="0" y="602" width="16" height="2" fill="#040408"/><rect x="0" y="604" width="7" height="1" fill="#040408"/><rect x="3" y="604" width="2" height="1" fill="#7a7a7a"/><rect x="0" y="605" width="14" height="3" fill="#0c0c48"/><rect x="8" y="605" width="5" height="1" fill="#7a7a7a"/><rect x="0" y="608" width="16" height="2" fill="#040408"/><rect x="7" y="608" width="5" height="1" fill="#7a7a7a"/><rect x="0" y="610" width="14" height="2" fill="#040408"/><rect x="4" y="610" width="3" height="1" fill="#7a7a7a"/><rect x="0" y="612" width="15" height="3" fill="#040408"/><rect x="9" y="612" width="6" height="1" fill="#7a7a7a"/><rect x="0" y="615" width="9" height="2" fill="#040408"/><rect x="0" y="617" width="16" height="3" fill="#040408"/><rect x="6" y="617" width="4" height="1" fill="#7a7a7a"/><rect x="0" y="620" width="9" height="4" fill="#040408"/><rect x="0" y="624" width="12" height="4" fill="#040408"/><rect x="0" y="628" width="8" height="2" fill="#040408"/><rect x="0" y="630" width="10" height="2" fill="#0c0c48"/><rect x="0" y="632" width="18" height="3" fill="#040408"/><rect x="0" y="635" width="16" height="2" fill="#040408"/><rect x="0" y="637" width="14" height="1" fill="#040408"/><rect x="0" y="638" width="12" height="3" fill="#040408"/><rect x="0" y="641" width="19" height="2" fill="#040408"/><rect x="0" y="643" width="11" height="4" fill="#040408"/><rect x="0" y="647" width="10" height="2" fill="#040408"/><rect x="0" y="649" width="14" height="2" fill="#040408"/><rect x="6" y="649" width="4" height="1" fill="#7a7a7a"/><rect x="0" y="651" width="14" height="2" fill="#040408"/><rect x="0" y="653" width="17" height="3" fill="#040408"/><rect x="0" y="656" width="8" height="2" fill="#040408"/><rect x="0" y="658" width="10" height="3" fill="#0c0c48"/><rect x="0" y="661" width="14" height="3" fill="#0c0c48"/><rect x="6" y="661" width="4" height="1" fill="#7a7a7a"/><rect x="0" y="664" width="13" height="1" fill="#040408"/><rect x="0" y="665" width="13" height="2" fill="#0c0c48"/><rect x="0" y="667" width="8" height="2" fill="#0c0c48"/><rect x="0" y="669" width="8" height="3" fill="#0c0c48"/><rect x="0" y="672" width="14" height="4" fill="#040408"/><rect x="0" y="676" width="7" height="1" fill="#040408"/><rect x="0" y="677" width="14" height="3" fill="#040408"/><rect x="0" y="680" width="12" height="3" fill="#0c0c48"/><rect x="4" y="680" width="3" height="1" fill="#7a7a7a"/><rect x="0" y="683" width="11" height="1" fill="#0c0c48"/><rect x="6" y="683" width="4" height="1" fill="#7a7a7a"/><rect x="0" y="684" width="14" height="1" fill="#040408"/><rect x="6" y="684" width="4" height="1" fill="#7a7a7a"/><rect x="0" y="685" width="14" height="3" fill="#040408"/><rect x="0" y="688" width="14" height="4" fill="#040408"/><rect x="7" y="688" width="5" height="1" fill="#7a7a7a"/><rect x="0" y="692" width="16" height="3" fill="#040408"/><rect x="9" y="692" width="6" height="1" fill="#7a7a7a"/><rect x="0" y="695" width="18" height="3" fill="#0c0c48"/><rect x="0" y="698" width="9" height="2" fill="#0c0c48"/><rect x="3" y="698" width="2" height="1" fill="#7a7a7a"/><rect x="0" y="700" width="18" height="2" fill="#040408"/><rect x="0" y="702" width="15" height="2" fill="#040408"/><rect x="0" y="704" width="15" height="2" fill="#040408"/><rect x="0" y="706" width="14" height="2" fill="#040408"/><rect x="8" y="706" width="5" height="1" fill="#7a7a7a"/><rect x="0" y="708" width="8" height="1" fill="#040408"/><rect x="0" y="709" width="18" height="2" fill="#040408"/><rect x="10" y="709" width="7" height="1" fill="#7a7a7a"/><rect x="0" y="711" width="14" height="2" fill="#040408"/><rect x="0" y="713" width="19" height="3" fill="#040408"/><rect x="0" y="716" width="17" height="2" fill="#040408"/><rect x="0" y="718" width="19" height="2" fill="#0c0c48"/><rect x="0" y="720" width="9" height="4" fill="#040408"/><rect x="5" y="720" width="3" height="1" fill="#7a7a7a"/><rect x="0" y="724" width="6" height="2" fill="#0c0c48"/><rect x="0" y="726" width="11" height="2" fill="#0c0c48"/><rect x="3" y="726" width="2" height="1" fill="#7a7a7a"/><rect x="0" y="728" width="14" height="3" fill="#0c0c48"/><rect x="5" y="728" width="3" height="1" fill="#7a7a7a"/><rect x="0" y="731" width="14" height="4" fill="#040408"/><rect x="0" y="735" width="13" height="4" fill="#040408"/><rect x="0" y="739" width="18" height="4" fill="#040408"/><rect x="7" y="739" width="4" height="1" fill="#7a7a7a"/><rect x="0" y="743" width="6" height="1" fill="#040408"/><rect x="0" y="744" width="14" height="4" fill="#040408"/><rect x="0" y="748" width="12" height="2" fill="#0c0c48"/><rect x="0" y="750" width="9" height="3" fill="#040408"/><rect x="0" y="753" width="11" height="1" fill="#040408"/><rect x="6" y="753" width="4" height="1" fill="#7a7a7a"/><rect x="0" y="754" width="16" height="2" fill="#040408"/><rect x="0" y="756" width="14" height="2" fill="#0c0c48"/><rect x="0" y="758" width="13" height="2" fill="#0c0c48"/><rect x="0" y="760" width="13" height="1" fill="#0c0c48"/><rect x="0" y="761" width="14" height="1" fill="#040408"/><rect x="0" y="762" width="9" height="3" fill="#040408"/><rect x="0" y="765" width="11" height="1" fill="#0c0c48"/><rect x="0" y="766" width="8" height="4" fill="#040408"/><rect x="5" y="766" width="3" height="1" fill="#7a7a7a"/><rect x="0" y="770" width="9" height="2" fill="#0c0c48"/><rect x="0" y="80" width="80" height="1" fill="#a8a8a8"/><rect x="0" y="158" width="80" height="1" fill="#a8a8a8"/><rect x="0" y="236" width="80" height="1" fill="#a8a8a8"/><rect x="0" y="314" width="80" height="1" fill="#a8a8a8"/><rect x="0" y="392" width="80" height="1" fill="#a8a8a8"/><rect x="0" y="470" width="80" height="1" fill="#a8a8a8"/><rect x="0" y="548" width="80" height="1" fill="#a8a8a8"/><rect x="0" y="627" width="80" height="1" fill="#a8a8a8"/><rect x="0" y="705" width="80" height="1" fill="#a8a8a8"/><polyline points="1.0,4.0 1.0,13.0 6.0,15.0 10.0,18.5 14.0,22.0 16.0,27.0 17.0,32.0 17.1,34.0 15.8,38.0 16.8,41.2 15.2,44.5 16.5,47.1 16.3,50.5 17.2,54.6 16.2,56.8 17.1,58.8 16.0,60.6 17.8,64.5 16.3,67.5 18.8,69.9 18.7,73.7 17.4,76.1 18.9,79.7 19.7,82.5 19.0,84.3 20.1,87.2 18.0,89.2 19.7,91.6 19.1,95.7 21.0,98.1 20.6,101.8 21.5,104.7 20.1,106.8 21.5,109.6 20.0,113.8 21.9,117.7 20.8,121.5 23.1,124.0 20.2,127.2 24.6,129.4 24.1,132.7 27.1,134.9 25.2,138.4 29.4,140.7 32.9,144.2 35.0,147.6 30.7,149.8 37.2,153.2 35.1,155.7 40.4,157.7 38.0,158.0 41.0,164.0 59.0,170.0 76.0,175.0 55.0,180.0 41.0,188.0 55.0,192.0 76.0,195.0 53.0,198.0 34.0,199.0 32.8,201.0 29.6,204.4 29.5,207.1 27.9,210.6 24.8,213.9 25.8,216.1 23.2,219.9 23.6,222.5 22.7,224.4 22.0,227.4 21.4,231.4 20.4,233.6 22.0,235.8 19.3,238.0 20.5,240.8 18.5,243.5 19.6,247.6 17.6,250.3 18.4,253.7 17.2,256.4 17.5,259.4 16.6,262.2 17.6,265.0 15.7,267.1 16.3,270.5 15.2,273.2 16.7,276.1 15.0,279.0 16.9,283.1 16.9,285.8 16.0,289.8 16.7,293.4 15.7,295.2 17.3,299.4 15.4,301.3 16.9,305.1 15.2,308.1 17.2,310.6 16.6,312.7 17.2,315.2 15.0,318.7 16.5,321.2 15.6,324.6 15.5,327.4 16.8,331.6 14.7,335.6 16.9,338.4 16.9,342.1 15.0,344.8 17.0,346.6 17.2,350.3 17.1,353.4 15.4,355.5 17.0,359.5 15.6,362.8 16.7,366.3 15.4,369.0 16.4,371.2 14.9,374.7 16.6,378.7 15.3,381.7 16.6,385.1 14.8,387.7 16.5,390.3 15.5,393.2 14.9,396.2 16.7,399.1 16.6,401.5 16.3,405.3 15.0,408.9 16.9,412.3 15.0,415.7 16.3,418.3 15.1,420.8 16.0,423.9 14.9,427.7 14.7,430.9 14.7,434.9 16.4,438.2 14.5,441.9 15.8,444.3 14.4,447.0 14.6,449.2 15.8,453.4 13.8,457.2 13.9,459.8 16.0,462.0 16.0,464.3 14.5,466.8 15.8,469.0 14.3,471.3 15.6,475.1 13.8,478.6 15.5,481.6 15.5,484.7 13.9,488.0 15.5,491.0 13.7,495.0 13.2,498.5 15.2,501.3 13.3,504.9 14.8,506.9 14.2,508.8 15.4,510.9 13.1,515.0 14.7,519.1 13.6,523.1 15.0,526.7 13.8,529.3 15.5,532.5 15.5,536.2 13.0,538.7 14.5,542.1 13.2,545.1 13.6,548.7 15.5,552.5 13.2,554.8 14.6,557.5 13.7,560.7 15.1,564.8 13.7,567.6 14.5,571.0 13.2,574.2 14.6,576.7 14.8,579.3 13.3,581.5 14.7,584.1 13.5,588.2 14.7,591.5 13.7,594.9 14.6,596.9 15.1,601.1 13.6,604.0 13.7,606.3 15.0,609.6 13.4,613.8 13.5,616.5 15.3,620.0 13.2,623.1 15.2,626.5 13.7,629.1 15.4,633.0 13.1,637.2 15.0,641.0 13.7,643.4 14.7,645.3 14.0,647.5 13.6,650.2 14.8,654.3 13.2,658.1 13.8,661.2 15.5,665.2 13.9,668.9 14.9,672.8 13.4,675.1 13.8,678.4 15.2,681.4 13.3,683.4 15.7,686.6 15.4,689.7 15.8,692.4 13.8,696.1 15.1,700.3 13.6,704.0 15.7,707.6 15.3,711.0 14.3,713.0 15.1,717.1 13.5,719.3 15.9,721.5 15.3,725.6 14.2,729.0 15.9,732.5 15.4,736.1 14.4,738.9 15.5,742.2 14.2,745.2 15.7,748.4 13.7,752.5 15.5,756.4 15.5,758.4 16.0,761.8 13.7,763.9 15.0,766.0 0.0,778.0" fill="none" stroke="#c83030" stroke-width="1.8"/><polyline points="1.0,4.0 4.0,5.0 10.0,6.5 13.0,8.0 17.0,10.5 22.0,13.5 27.0,16.0 31.0,18.5 29.0,21.0 31.0,23.5 35.0,26.0 37.0,30.0 38.0,34.0 39.3,36.0 35.5,38.3 38.6,40.0 39.2,42.1 40.8,44.7 36.6,47.6 39.8,50.9 36.7,53.9 39.1,56.7 35.6,60.0 40.3,63.4 40.3,65.8 33.8,69.3 38.0,71.1 38.9,73.6 34.3,76.2 38.8,79.0 40.5,82.0 40.6,85.6 35.4,89.0 37.3,91.7 44.3,95.0 39.9,96.7 41.1,98.4 46.7,100.3 46.0,103.7 50.4,105.3 45.9,108.7 52.2,112.4 50.7,115.2 54.0,117.6 47.2,119.2 50.9,122.8 43.8,125.3 48.3,128.1 51.6,135.0 58.0,138.0 67.0,146.0 74.6,152.0 60.8,140.0 62.9,142.8 67.9,145.5 71.6,149.2 73.6,151.6 76.8,153.9 78.1,157.7 76.3,160.2 79.4,164.1 78.5,167.0 81.0,170.0 81.0,183.0 72.0,187.0 81.0,190.0 81.0,196.0 64.0,199.0 57.7,205.0 54.8,208.0 51.7,211.4 53.6,214.1 48.5,217.8 49.9,220.9 45.6,224.0 47.7,227.7 46.8,232.0 40.8,233.8 44.8,236.5 38.9,239.2 42.9,241.5 38.8,244.6 41.6,246.4 42.0,249.2 38.2,252.3 40.8,255.2 36.4,257.0 39.7,259.1 33.1,262.5 37.6,264.9 32.5,267.3 36.1,270.1 33.5,273.5 36.2,275.3 31.8,277.0 31.5,279.4 35.0,281.2 29.5,284.0 34.5,286.7 28.9,288.9 29.6,290.7 29.8,292.7 34.4,295.0 31.1,298.2 34.1,301.6 28.8,304.0 34.7,305.6 30.8,308.0 32.9,310.3 29.3,312.0 34.6,315.2 30.6,318.3 33.1,320.7 33.4,323.1 34.2,325.4 30.5,328.7 32.8,332.3 33.9,335.9 30.5,337.6 34.7,340.5 29.5,342.3 33.6,344.1 29.8,345.7 33.1,348.9 34.0,350.8 29.5,354.2 33.4,355.9 30.5,358.7 32.0,360.8 29.3,363.3 33.2,365.2 34.3,367.9 28.3,371.5 33.2,374.1 33.5,375.8 28.7,378.0 33.6,379.8 28.8,382.4 32.7,385.2 33.8,387.2 28.1,390.1 33.2,392.9 30.1,395.3 32.0,398.1 29.0,400.4 33.5,402.0 30.2,405.2 27.7,408.0 29.9,411.3 33.4,413.3 29.8,415.4 33.8,418.9 28.8,422.0 32.9,424.3 28.6,426.4 33.6,428.9 27.9,430.6 33.3,432.7 29.7,434.7 33.2,436.9 33.4,440.1 33.4,443.5 31.8,445.3 28.5,448.1 32.0,451.4 28.5,453.5 32.0,456.3 28.8,458.7 31.3,461.3 29.2,464.3 31.9,466.5 27.2,469.7 32.1,471.7 28.0,473.3 31.5,476.6 30.9,479.3 28.0,481.4 33.0,483.0 28.9,484.9 33.1,488.1 27.0,490.5 32.3,492.4 28.4,494.5 32.0,496.4 30.5,499.2 27.9,500.8 26.8,503.8 30.7,505.9 28.5,508.9 31.2,512.0 26.6,514.7 32.3,516.6 28.6,518.4 32.5,521.1 27.2,523.0 32.7,526.4 31.4,529.4 27.8,532.7 32.6,535.5 26.3,539.0 32.3,541.3 28.2,544.9 31.3,548.4 28.2,552.0 31.4,555.3 27.8,558.6 29.9,560.8 27.4,563.9 28.1,565.6 30.3,568.3 27.0,571.0 26.1,574.2 32.1,576.5 27.1,578.7 31.3,582.0 27.0,585.6 32.1,588.4 27.9,590.0 30.4,592.7 29.7,594.7 27.6,596.5 31.3,598.4 31.3,600.7 26.9,604.2 30.2,607.3 26.2,608.9 31.1,611.2 26.6,612.9 29.8,616.5 26.2,619.1 31.9,622.0 26.1,624.6 30.4,628.2 26.3,630.4 29.9,633.5 31.4,636.8 27.2,638.9 30.7,642.4 31.3,644.3 27.3,647.2 30.6,649.7 32.1,653.3 29.7,655.2 28.1,656.8 31.2,658.8 25.9,660.9 31.0,664.3 26.5,666.2 27.1,668.1 31.6,670.7 26.6,672.9 31.2,675.4 28.1,678.0 31.5,681.1 26.9,683.7 31.3,685.6 26.0,688.2 30.4,689.8 25.9,691.5 30.1,694.7 27.1,698.1 31.6,700.7 27.9,703.9 27.5,706.9 30.5,710.3 25.9,713.7 31.2,716.9 30.7,718.7 27.2,721.9 31.8,723.9 29.8,726.7 27.6,730.0 29.8,732.2 28.1,734.1 26.4,735.8 27.4,737.9 32.1,740.9 27.0,743.5 30.3,746.6 27.7,749.6 27.9,752.7 30.0,755.5 26.3,758.3 31.7,761.0 29.0,765.0 50.0,766.5 30.0,768.0 23.0,770.0 4.0,782.0" fill="none" stroke="#38dc38" stroke-width="1.1"/><circle cx="64.4" cy="298" r="2.8" fill="#000" stroke="#c02020" stroke-width="1.2"/><path d="M72 782 Q76 776 80 774" fill="none" stroke="#30e030" stroke-width="1"/></svg></body></html>
